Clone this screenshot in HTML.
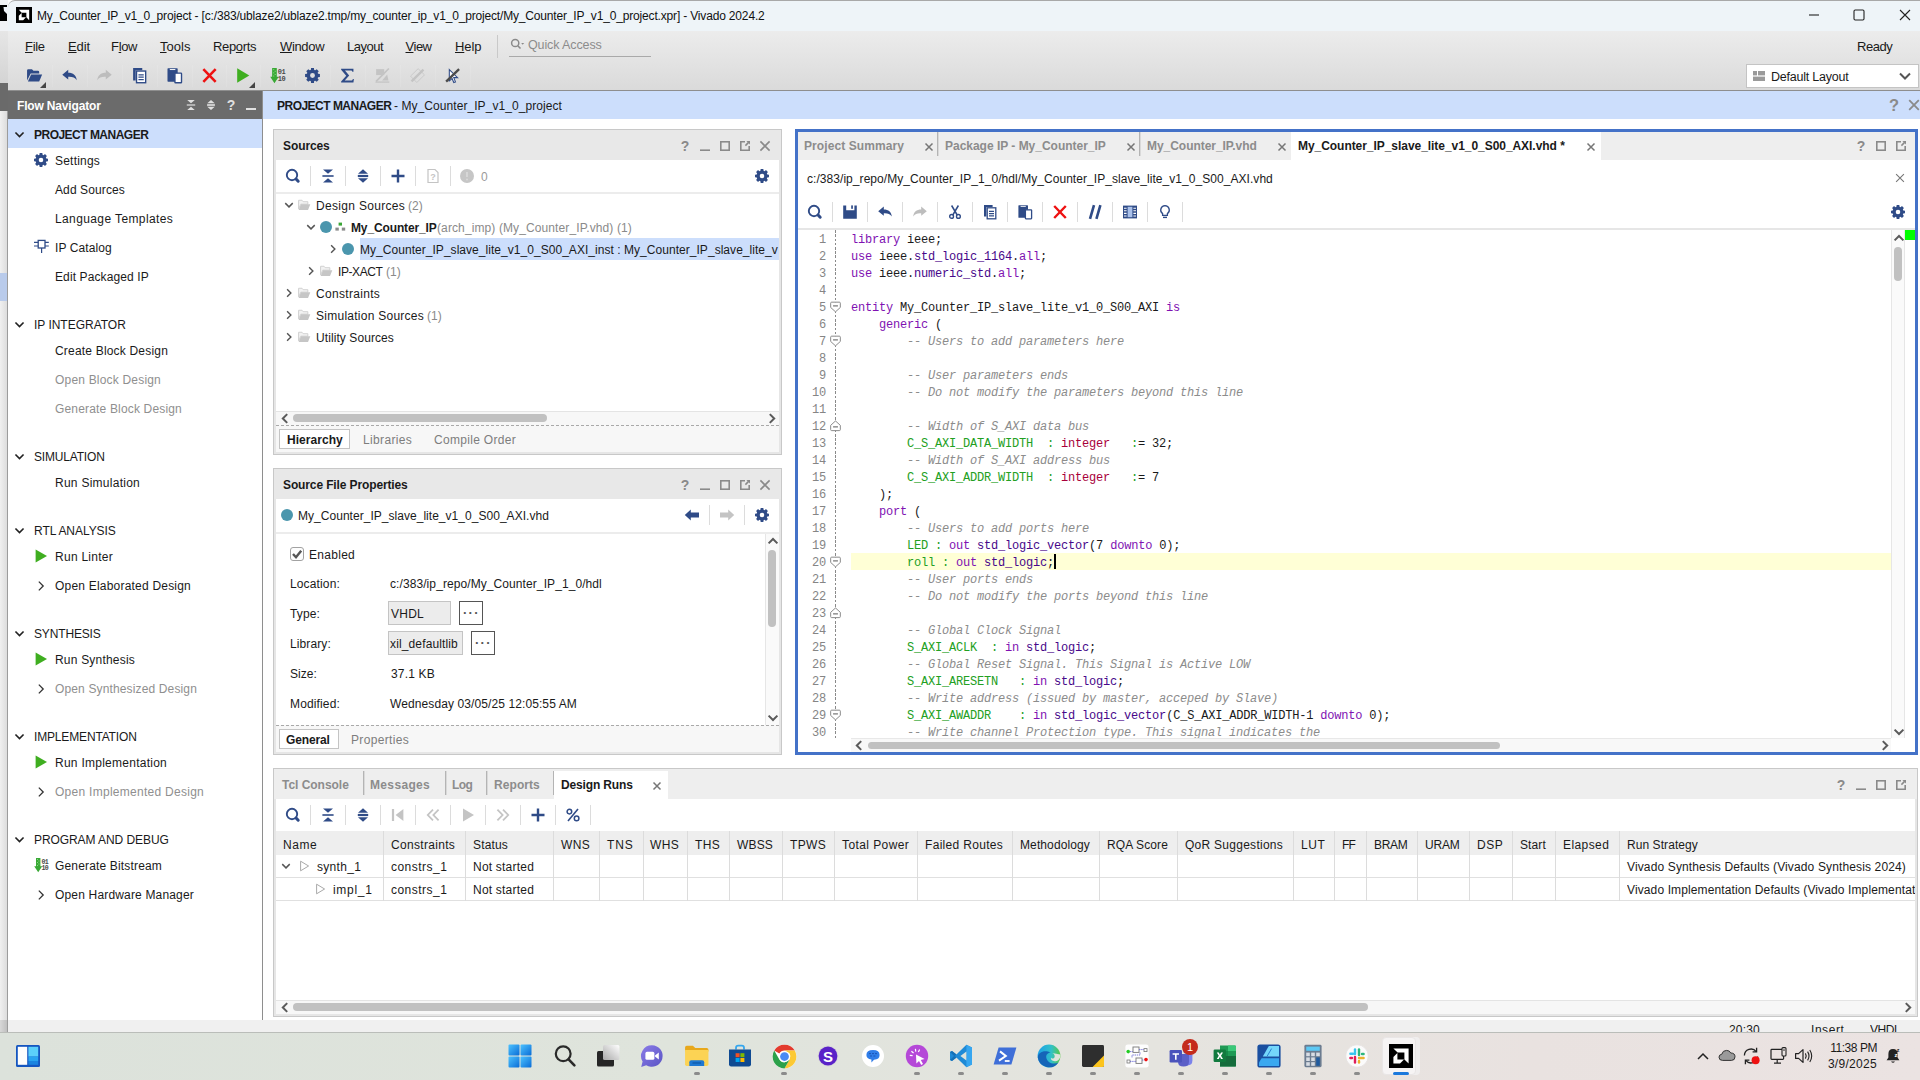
<!DOCTYPE html>
<html lang="en"><head><meta charset="utf-8"><title>Vivado 2024.2</title>
<style>
html,body{margin:0;padding:0;}
body{width:1920px;height:1080px;overflow:hidden;background:#fff;font-family:"Liberation Sans",sans-serif;font-size:12px;color:#1a1a1a;}
#root{position:relative;width:1920px;height:1080px;overflow:hidden;}
.b{position:absolute;box-sizing:border-box;}
.t{position:absolute;white-space:pre;}
svg{overflow:visible;}
.code{font-family:"Liberation Mono",monospace;font-size:12px;letter-spacing:-0.2px;}
.kw{color:#8012b2}.ty{color:#47088a}.cm{color:#8c8c8c;font-style:italic}.id{color:#22a022}.in{color:#a8003a}
u{text-decoration:underline;text-underline-offset:1px;}

</style></head>
<body>
<div id="root">
<section id="window-chrome">
<div class="b" style="left:0px;top:0px;width:8px;height:1032px;background:linear-gradient(90deg,#f0f0f0,#dadada);"></div>
<div class="b" style="left:0px;top:0px;width:8px;height:31px;background:#f1f3f6;"></div>
<div class="b" style="left:0px;top:5px;width:7px;height:16px;background:#000;"></div>
<svg class="b" style="left:0;top:5px" width="7" height="16" viewBox="0 0 7 16"><path d="M3.5 2L7 2L7 9L4 6Z" fill="#eef3f9"/></svg>
<div class="b" style="left:0px;top:31px;width:8px;height:52px;background:linear-gradient(180deg,#e6e6e6,#d4d4d4);"></div>
<div class="b" style="left:0px;top:83px;width:8px;height:28px;background:#6a6a6a;"></div>
<div class="b" style="left:0px;top:273px;width:8px;height:28px;background:#b9cbeb;"></div>
<div class="b" style="left:0px;top:1020px;width:8px;height:12px;background:linear-gradient(90deg,#d8d8d8,#bcbcbc);"></div>
<div class="b" style="left:7px;top:111px;width:1px;height:921px;background:#9c9c9c;"></div>
<div class="b" style="left:8px;top:0px;width:1912px;height:31px;background:#eef4f8;border-top:1px solid #a8a8a8;border-top-left-radius:7px;"></div>
<svg class="b" style="left:16px;top:7px;" width="16" height="16" viewBox="0 0 17 17"><rect width="17" height="17" fill="#000"/><path d="M3 3H14V14L11 11V6H6Z" fill="#fff"/><path d="M3 14V9.2L6 6.4V11H10.6L7.6 14Z" fill="#fff"/></svg>
<div class="t" style="top:8.0px;line-height:16px;font-size:12px;color:#111;letter-spacing:-0.168px;left:37px;">My_Counter_IP_v1_0_project - [c:/383/ublaze2/ublaze2.tmp/my_counter_ip_v1_0_project/My_Counter_IP_v1_0_project.xpr] - Vivado 2024.2</div>
<svg class="b" style="left:1806px;top:7.3px;" width="16" height="16" viewBox="0 0 16 16"><path d="M3 8h10" stroke="#222" stroke-width="1.1"/></svg>
<svg class="b" style="left:1851px;top:7px;" width="16" height="16" viewBox="0 0 16 16"><rect x="3" y="3" width="10" height="10" rx="1.2" fill="none" stroke="#222" stroke-width="1.1"/></svg>
<svg class="b" style="left:1897px;top:7px;" width="16" height="16" viewBox="0 0 16 16"><path d="M3 3L13 13M13 3L3 13" stroke="#222" stroke-width="1.1"/></svg>
<div class="b" style="left:8px;top:31px;width:1912px;height:59px;background:linear-gradient(180deg,#ececec 0%,#e3e3e3 50%,#dadada 100%);"></div>
<div class="b" style="left:8px;top:90px;width:1912px;height:1px;background:#8e8e8e;"></div>
<div class="t" style="top:39.0px;line-height:16px;font-size:13px;color:#1a1a1a;left:25px;letter-spacing:-0.316px;"><u>F</u>ile</div>
<div class="t" style="top:39.0px;line-height:16px;font-size:13px;color:#1a1a1a;left:68px;letter-spacing:-0.134px;"><u>E</u>dit</div>
<div class="t" style="top:39.0px;line-height:16px;font-size:13px;color:#1a1a1a;left:111px;letter-spacing:-0.316px;">F<u>l</u>ow</div>
<div class="t" style="top:39.0px;line-height:16px;font-size:13px;color:#1a1a1a;left:160px;letter-spacing:0.038px;"><u>T</u>ools</div>
<div class="t" style="top:39.0px;line-height:16px;font-size:13px;color:#1a1a1a;left:213px;letter-spacing:-0.337px;">Rep<u>o</u>rts</div>
<div class="t" style="top:39.0px;line-height:16px;font-size:13px;color:#1a1a1a;left:280px;letter-spacing:-0.347px;"><u>W</u>indow</div>
<div class="t" style="top:39.0px;line-height:16px;font-size:13px;color:#1a1a1a;left:347px;letter-spacing:-0.506px;">La<u>y</u>out</div>
<div class="t" style="top:39.0px;line-height:16px;font-size:13px;color:#1a1a1a;left:405.5px;letter-spacing:-0.481px;"><u>V</u>iew</div>
<div class="t" style="top:39.0px;line-height:16px;font-size:13px;color:#1a1a1a;left:455px;letter-spacing:-0.079px;"><u>H</u>elp</div>
<div class="b" style="left:497px;top:35px;width:1px;height:23px;background:#c9c9c9;"></div>
<svg class="b" style="left:509px;top:37px;" width="16" height="16" viewBox="0 0 16 16"><circle cx="6.2" cy="6" r="3.6" fill="none" stroke="#8a8a8a" stroke-width="1.5"/><path d="M8.8 8.8L11.5 11.5" stroke="#8a8a8a" stroke-width="1.6"/><path d="M12.2 6h3l-1.5 1.8z" fill="#8a8a8a"/></svg>
<div class="t" style="top:36.8px;line-height:16px;font-size:12.5px;color:#8c8c8c;letter-spacing:-0.111px;left:528px;">Quick Access</div>
<div class="b" style="left:509px;top:56px;width:142px;height:1px;background:#a9a9a9;"></div>
<div class="t" style="top:39.0px;line-height:16px;font-size:13px;color:#1a1a1a;letter-spacing:-0.445px;left:1857px;">Ready</div>
<svg class="b" style="left:25.5px;top:67.0px;" width="17" height="17" viewBox="0 0 16 16"><path d="M1 3.2Q1 2 2.2 2H5.6L7 3.6H11.2Q12.4 3.6 12.4 4.8V6H4.4L1 12.6z" fill="#2f4b87"/><path d="M4.8 7H15.2L12.4 13.6H1.8z" fill="#2f4b87"/></svg>
<svg class="b" style="left:40px;top:82px;" width="5" height="5" viewBox="0 0 5 5"><path d="M6 0V6H0z" fill="#444"/></svg>
<svg class="b" style="left:60.5px;top:67.0px;" width="17" height="17" viewBox="0 0 16 16"><path d="M1.2 7.2L6.8 2.6V5.4C11.5 5.4 14.4 7.8 14.8 12.4C13 9.8 10.6 9 6.8 9.2V11.8z" fill="#2f4b87"/></svg>
<svg class="b" style="left:95.5px;top:67.0px;" width="17" height="17" viewBox="0 0 16 16"><path d="M14.8 7.2L9.2 2.6V5.4C4.5 5.4 1.6 7.8 1.2 12.4C3 9.8 5.4 9 9.2 9.2V11.8z" fill="#bdbdbd"/></svg>
<svg class="b" style="left:130.5px;top:67.0px;" width="17" height="17" viewBox="0 0 16 16"><path d="M2 1h8.6v2H4.4v9.6H2z" fill="#2f4b87"/><rect x="5.2" y="3.8" width="8.6" height="11" rx="0" fill="#fff" stroke="#2f4b87" stroke-width="1.3"/><path d="M7 7.4h5M7 9.6h5M7 11.8h5" stroke="#2f4b87" stroke-width="1.2"/></svg>
<svg class="b" style="left:165.5px;top:67.0px;" width="17" height="17" viewBox="0 0 16 16"><rect x="1.4" y="1.2" width="9.6" height="12.6" rx="0.6" fill="#2f4b87"/><path d="M3.6 2.4h5.2" stroke="#fff" stroke-width="0.9"/><rect x="8.4" y="5.8" width="6.2" height="9" rx="0.5" fill="#fff" stroke="#2f4b87" stroke-width="1.3"/></svg>
<svg class="b" style="left:200.5px;top:67.0px;" width="17" height="17" viewBox="0 0 16 16"><path d="M2.2 2L13.8 14M13.8 2L2.2 14" stroke="#ee1111" stroke-width="2.4"/></svg>
<svg class="b" style="left:233.5px;top:67.0px;" width="17" height="17" viewBox="0 0 16 16"><path d="M3 1.2L14.4 8L3 14.8z" fill="#3fae20"/></svg>
<svg class="b" style="left:249px;top:82px;" width="5" height="5" viewBox="0 0 5 5"><path d="M6 0V6H0z" fill="#444"/></svg>
<svg class="b" style="left:269.5px;top:67.0px;" width="17" height="17" viewBox="0 0 16 16"><path d="M2 1h4.4v8.2h1.8L4.2 15.2L0.2 9.2H2z" fill="#39a935"/><path d="M3 2.5h1M4.4 4h1M3 5.5h1M4.4 7h1M3 8.5h1" stroke="#8fdc8a" stroke-width="0.9"/><text x="7.4" y="6.8" font-family="Liberation Mono, monospace" font-weight="bold" font-size="6.6" fill="#4a4a4a" letter-spacing="-0.5">01</text><text x="7.4" y="13.2" font-family="Liberation Mono, monospace" font-weight="bold" font-size="6.6" fill="#4a4a4a" letter-spacing="-0.5">10</text></svg>
<svg class="b" style="left:303.5px;top:67.0px;" width="17" height="17" viewBox="0 0 16 16"><path d="M6.66 1.03L9.34 1.03L9.57 2.73L10.61 3.16L11.98 2.12L13.88 4.02L12.84 5.39L13.27 6.43L14.97 6.66L14.97 9.34L13.27 9.57L12.84 10.61L13.88 11.98L11.98 13.88L10.61 12.84L9.57 13.27L9.34 14.97L6.66 14.97L6.43 13.27L5.39 12.84L4.02 13.88L2.12 11.98L3.16 10.61L2.73 9.57L1.03 9.34L1.03 6.66L2.73 6.43L3.16 5.39L2.12 4.02L4.02 2.12L5.39 3.16L6.43 2.73ZM8 5.7A2.3 2.3 0 1 0 8 10.3A2.3 2.3 0 1 0 8 5.7Z" fill="#2f4b87" fill-rule="evenodd"/></svg>
<svg class="b" style="left:338.5px;top:67.0px;" width="17" height="17" viewBox="0 0 16 16"><path d="M2 1.6H13.6V4.4H12.6C12.4 3.4 12 3.2 11 3.2H5.6L9.6 8L5.4 12.8H11.2C12.4 12.8 12.8 12.4 13 11.2H14L13.6 14.6H2V13.6L6.8 8.2L2 2.6z" fill="#2f4b87"/></svg>
<svg class="b" style="left:373.5px;top:67.0px;" width="17" height="17" viewBox="0 0 16 16"><rect x="2" y="2" width="7.6" height="5.6" fill="#c4c4c4"/><path d="M14 1.4L2 13.6" stroke="#c4c4c4" stroke-width="1.6"/><path d="M7.6 12.8L13.6 12.8L12.4 7z" fill="#c4c4c4"/><path d="M1.4 14.2H14.4" stroke="#c4c4c4" stroke-width="1.2"/></svg>
<svg class="b" style="left:408.5px;top:67.0px;" width="17" height="17" viewBox="0 0 16 16"><path d="M8.6 1.6L14.6 7.4L7.4 14.6L1.4 8.6z" fill="none" stroke="#c8c8c8" stroke-width="0.9"/><path d="M13.6 2.4L2.4 13.6" stroke="#c4c4c4" stroke-width="2.2"/></svg>
<svg class="b" style="left:443.5px;top:67.0px;" width="17" height="17" viewBox="0 0 16 16"><path d="M5 2.4L12.8 10H9.2L10.8 14L9.2 14.6L7.6 10.8L5 13z" fill="#fff" stroke="#2f4b87" stroke-width="1"/><path d="M14.2 2L2 13.8" stroke="#4a4a4a" stroke-width="2.2"/></svg>
<div class="b" style="left:52px;top:65px;width:1px;height:22px;background:rgba(255,255,255,0.10);"></div>
<div class="b" style="left:87px;top:65px;width:1px;height:22px;background:rgba(255,255,255,0.10);"></div>
<div class="b" style="left:122px;top:65px;width:1px;height:22px;background:rgba(255,255,255,0.10);"></div>
<div class="b" style="left:157px;top:65px;width:1px;height:22px;background:rgba(255,255,255,0.10);"></div>
<div class="b" style="left:192px;top:65px;width:1px;height:22px;background:rgba(255,255,255,0.10);"></div>
<div class="b" style="left:226px;top:65px;width:1px;height:22px;background:rgba(255,255,255,0.10);"></div>
<div class="b" style="left:260px;top:65px;width:1px;height:22px;background:rgba(255,255,255,0.10);"></div>
<div class="b" style="left:295px;top:65px;width:1px;height:22px;background:rgba(255,255,255,0.10);"></div>
<div class="b" style="left:330px;top:65px;width:1px;height:22px;background:rgba(255,255,255,0.10);"></div>
<div class="b" style="left:365px;top:65px;width:1px;height:22px;background:rgba(255,255,255,0.10);"></div>
<div class="b" style="left:400px;top:65px;width:1px;height:22px;background:rgba(255,255,255,0.10);"></div>
<div class="b" style="left:435px;top:65px;width:1px;height:22px;background:rgba(255,255,255,0.10);"></div>
<div class="b" style="left:470px;top:65px;width:1px;height:22px;background:rgba(255,255,255,0.10);"></div>
<div class="b" style="left:1746px;top:64px;width:173px;height:24px;background:#fff;border:1px solid #c4c4c4;"></div>
<svg class="b" style="left:1753px;top:71px;" width="12" height="10" viewBox="0 0 12 10"><rect x="0" y="0" width="4" height="4.4" fill="#9a9a9a"/><rect x="5" y="0" width="7" height="4.4" fill="#9a9a9a"/><rect x="0" y="5.6" width="12" height="4.4" fill="#9a9a9a"/></svg>
<div class="t" style="top:69.2px;line-height:16px;font-size:12.5px;color:#1a1a1a;letter-spacing:-0.216px;left:1771px;">Default Layout</div>
<svg class="b" style="left:1897px;top:68px;" width="16" height="16" viewBox="0 0 16 16"><path d="M3 5.5L8 10.5L13 5.5" fill="none" stroke="#555" stroke-width="2.0"/></svg>
</section>
<section id="flow-navigator">
<div class="b" style="left:8px;top:91px;width:254px;height:929px;background:#fff;"></div>
<div class="b" style="left:262px;top:91px;width:1px;height:929px;background:#8e8e8e;"></div>
<div class="b" style="left:8px;top:91px;width:254px;height:28px;background:#6b6b6b;"></div>
<div class="t" style="top:97.8px;line-height:16px;font-size:12px;color:#fff;letter-spacing:-0.170px;left:17px;font-weight:bold;">Flow Navigator</div>
<svg class="b" style="left:185px;top:99px;" width="12" height="12" viewBox="0 0 16 16"><path d="M2.4 7.2h11.2v1.6H2.4z" fill="#e0e0e0"/><path d="M3 1.4h10L8 5.8zM3 14.6h10L8 10.2z" fill="#e0e0e0"/></svg>
<svg class="b" style="left:205px;top:99px;" width="12" height="12" viewBox="0 0 16 16"><path d="M2.8 6.9h10.4v2.2H2.8z" fill="#e0e0e0"/><path d="M3 5.8h10L8 1.2zM3 10.2h10L8 14.8z" fill="#e0e0e0"/></svg>
<svg class="b" style="left:223px;top:97px;" width="16" height="16" viewBox="0 0 16 16"><text x="8" y="13" text-anchor="middle" font-family="Liberation Sans, sans-serif" font-weight="bold" font-size="14" fill="#e0e0e0">?</text></svg>
<div class="b" style="left:246px;top:108px;width:10px;height:2px;background:#e0e0e0;"></div>
<div class="b" style="left:8px;top:119px;width:254px;height:29px;background:#ccdefc;"></div>
<svg class="b" style="left:13px;top:128px;" width="13" height="13" viewBox="0 0 16 16"><path d="M3 5.5L8 10.5L13 5.5" fill="none" stroke="#222" stroke-width="2.0"/></svg>
<div class="t" style="top:126.8px;line-height:16px;font-size:12px;color:#1a1a1a;letter-spacing:-0.515px;left:34px;font-weight:bold;">PROJECT MANAGER</div>
<div class="t" style="top:152.8px;line-height:16px;font-size:12px;color:#1a1a1a;letter-spacing:0.206px;left:55px;">Settings</div>
<svg class="b" style="left:33px;top:152px;" width="16" height="16" viewBox="0 0 16 16"><path d="M6.66 1.03L9.34 1.03L9.57 2.73L10.61 3.16L11.98 2.12L13.88 4.02L12.84 5.39L13.27 6.43L14.97 6.66L14.97 9.34L13.27 9.57L12.84 10.61L13.88 11.98L11.98 13.88L10.61 12.84L9.57 13.27L9.34 14.97L6.66 14.97L6.43 13.27L5.39 12.84L4.02 13.88L2.12 11.98L3.16 10.61L2.73 9.57L1.03 9.34L1.03 6.66L2.73 6.43L3.16 5.39L2.12 4.02L4.02 2.12L5.39 3.16L6.43 2.73ZM8 5.7A2.3 2.3 0 1 0 8 10.3A2.3 2.3 0 1 0 8 5.7Z" fill="#2f4b87" fill-rule="evenodd"/></svg>
<div class="t" style="top:181.8px;line-height:16px;font-size:12px;color:#1a1a1a;letter-spacing:0.109px;left:55px;">Add Sources</div>
<div class="t" style="top:210.8px;line-height:16px;font-size:12px;color:#1a1a1a;letter-spacing:0.388px;left:55px;">Language Templates</div>
<div class="t" style="top:239.8px;line-height:16px;font-size:12px;color:#1a1a1a;letter-spacing:0.109px;left:55px;">IP Catalog</div>
<svg class="b" style="left:33px;top:238px;" width="16" height="16" viewBox="0 0 16 16"><rect x="5.2" y="2.4" width="6.8" height="7.6" fill="none" stroke="#2f4b87" stroke-width="1.3"/><path d="M1 4.4H5.2M1 8H5.2M12 4.4H15.8M12 8H15.8M8.6 10V15" stroke="#2f4b87" stroke-width="1.2" fill="none"/></svg>
<div class="t" style="top:268.8px;line-height:16px;font-size:12px;color:#1a1a1a;letter-spacing:0.116px;left:55px;">Edit Packaged IP</div>
<svg class="b" style="left:13px;top:318px;" width="13" height="13" viewBox="0 0 16 16"><path d="M3 5.5L8 10.5L13 5.5" fill="none" stroke="#222" stroke-width="2.0"/></svg>
<div class="t" style="top:316.8px;line-height:16px;font-size:12px;color:#1a1a1a;letter-spacing:-0.018px;left:34px;">IP INTEGRATOR</div>
<div class="t" style="top:342.8px;line-height:16px;font-size:12px;color:#1a1a1a;letter-spacing:0.190px;left:55px;">Create Block Design</div>
<div class="t" style="top:371.8px;line-height:16px;font-size:12px;color:#8f8f8f;letter-spacing:0.192px;left:55px;">Open Block Design</div>
<div class="t" style="top:400.8px;line-height:16px;font-size:12px;color:#8f8f8f;letter-spacing:0.170px;left:55px;">Generate Block Design</div>
<svg class="b" style="left:13px;top:450px;" width="13" height="13" viewBox="0 0 16 16"><path d="M3 5.5L8 10.5L13 5.5" fill="none" stroke="#222" stroke-width="2.0"/></svg>
<div class="t" style="top:448.8px;line-height:16px;font-size:12px;color:#1a1a1a;letter-spacing:-0.184px;left:34px;">SIMULATION</div>
<div class="t" style="top:474.8px;line-height:16px;font-size:12px;color:#1a1a1a;letter-spacing:0.263px;left:55px;">Run Simulation</div>
<svg class="b" style="left:13px;top:524px;" width="13" height="13" viewBox="0 0 16 16"><path d="M3 5.5L8 10.5L13 5.5" fill="none" stroke="#222" stroke-width="2.0"/></svg>
<div class="t" style="top:522.8px;line-height:16px;font-size:12px;color:#1a1a1a;letter-spacing:-0.062px;left:34px;">RTL ANALYSIS</div>
<div class="t" style="top:548.8px;line-height:16px;font-size:12px;color:#1a1a1a;letter-spacing:0.270px;left:55px;">Run Linter</div>
<svg class="b" style="left:34px;top:549.2px;" width="14" height="14" viewBox="0 0 14 14"><path d="M1.6 0.6L13 7L1.6 13.4z" fill="#3fae20"/></svg>
<div class="t" style="top:577.8px;line-height:16px;font-size:12px;color:#1a1a1a;letter-spacing:0.208px;left:55px;">Open Elaborated Design</div>
<svg class="b" style="left:33.7px;top:578.6px;" width="14" height="14" viewBox="0 0 16 16"><path d="M5.5 3L10.5 8L5.5 13" fill="none" stroke="#333" stroke-width="1.5"/></svg>
<svg class="b" style="left:13px;top:627px;" width="13" height="13" viewBox="0 0 16 16"><path d="M3 5.5L8 10.5L13 5.5" fill="none" stroke="#222" stroke-width="2.0"/></svg>
<div class="t" style="top:625.8px;line-height:16px;font-size:12px;color:#1a1a1a;letter-spacing:-0.152px;left:34px;">SYNTHESIS</div>
<div class="t" style="top:651.8px;line-height:16px;font-size:12px;color:#1a1a1a;letter-spacing:0.202px;left:55px;">Run Synthesis</div>
<svg class="b" style="left:34px;top:652.2px;" width="14" height="14" viewBox="0 0 14 14"><path d="M1.6 0.6L13 7L1.6 13.4z" fill="#3fae20"/></svg>
<div class="t" style="top:680.8px;line-height:16px;font-size:12px;color:#8f8f8f;letter-spacing:0.139px;left:55px;">Open Synthesized Design</div>
<svg class="b" style="left:33.7px;top:681.6px;" width="14" height="14" viewBox="0 0 16 16"><path d="M5.5 3L10.5 8L5.5 13" fill="none" stroke="#333" stroke-width="1.5"/></svg>
<svg class="b" style="left:13px;top:730px;" width="13" height="13" viewBox="0 0 16 16"><path d="M3 5.5L8 10.5L13 5.5" fill="none" stroke="#222" stroke-width="2.0"/></svg>
<div class="t" style="top:728.8px;line-height:16px;font-size:12px;color:#1a1a1a;letter-spacing:-0.161px;left:34px;">IMPLEMENTATION</div>
<div class="t" style="top:754.8px;line-height:16px;font-size:12px;color:#1a1a1a;letter-spacing:0.259px;left:55px;">Run Implementation</div>
<svg class="b" style="left:34px;top:755.2px;" width="14" height="14" viewBox="0 0 14 14"><path d="M1.6 0.6L13 7L1.6 13.4z" fill="#3fae20"/></svg>
<div class="t" style="top:783.8px;line-height:16px;font-size:12px;color:#8f8f8f;letter-spacing:0.275px;left:55px;">Open Implemented Design</div>
<svg class="b" style="left:33.7px;top:784.6px;" width="14" height="14" viewBox="0 0 16 16"><path d="M5.5 3L10.5 8L5.5 13" fill="none" stroke="#333" stroke-width="1.5"/></svg>
<svg class="b" style="left:13px;top:833px;" width="13" height="13" viewBox="0 0 16 16"><path d="M3 5.5L8 10.5L13 5.5" fill="none" stroke="#222" stroke-width="2.0"/></svg>
<div class="t" style="top:831.8px;line-height:16px;font-size:12px;color:#1a1a1a;letter-spacing:-0.076px;left:34px;">PROGRAM AND DEBUG</div>
<div class="t" style="top:857.8px;line-height:16px;font-size:12px;color:#1a1a1a;letter-spacing:0.162px;left:55px;">Generate Bitstream</div>
<svg class="b" style="left:34px;top:857px;" width="16" height="16" viewBox="0 0 16 16"><path d="M2 1h4.4v8.2h1.8L4.2 15.2L0.2 9.2H2z" fill="#39a935"/><path d="M3 2.5h1M4.4 4h1M3 5.5h1M4.4 7h1M3 8.5h1" stroke="#8fdc8a" stroke-width="0.9"/><text x="7.4" y="6.8" font-family="Liberation Mono, monospace" font-weight="bold" font-size="6.6" fill="#4a4a4a" letter-spacing="-0.5">01</text><text x="7.4" y="13.2" font-family="Liberation Mono, monospace" font-weight="bold" font-size="6.6" fill="#4a4a4a" letter-spacing="-0.5">10</text></svg>
<div class="t" style="top:886.8px;line-height:16px;font-size:12px;color:#1a1a1a;letter-spacing:0.170px;left:55px;">Open Hardware Manager</div>
<svg class="b" style="left:33.7px;top:887.6px;" width="14" height="14" viewBox="0 0 16 16"><path d="M5.5 3L10.5 8L5.5 13" fill="none" stroke="#333" stroke-width="1.5"/></svg>
<div class="b" style="left:8px;top:1020px;width:1912px;height:12px;background:#f0f0f0;"></div>
<div class="b" style="left:263px;top:91px;width:1657px;height:28px;background:#ccdefc;"></div>
<div class="t" style="top:97.8px;line-height:16px;font-size:12px;color:#1a1a1a;letter-spacing:-0.515px;left:277px;font-weight:bold;">PROJECT MANAGER</div>
<div class="t" style="top:97.8px;line-height:16px;font-size:12px;color:#1a1a1a;letter-spacing:0.063px;left:394px;">- My_Counter_IP_v1_0_project</div>
<svg class="b" style="left:1886px;top:98px;" width="16" height="16" viewBox="0 0 16 16"><text x="8" y="13" text-anchor="middle" font-family="Liberation Sans, sans-serif" font-weight="bold" font-size="16.5" fill="#8a8a8a">?</text></svg>
<svg class="b" style="left:1906px;top:97px;" width="16" height="16" viewBox="0 0 16 16"><path d="M3.2 3.2L12.8 12.8M12.8 3.2L3.2 12.8" stroke="#8a8a8a" stroke-width="1.8" fill="none"/></svg>
</section>
<section id="sources-panel">
<div class="b" style="left:273px;top:129px;width:509px;height:326px;background:#fff;border:1px solid #c8c8c8;"></div>
<div class="b" style="left:274px;top:130px;width:507px;height:324px;border:2px solid #e6e6e6;"></div>
<div class="b" style="left:274px;top:130px;width:507px;height:30px;background:#e8e8e8;"></div>
<div class="t" style="top:137.8px;line-height:16px;font-size:12px;color:#1a1a1a;letter-spacing:-0.093px;left:283px;font-weight:bold;">Sources</div>
<svg class="b" style="left:677px;top:138px;" width="16" height="16" viewBox="0 0 16 16"><text x="8" y="13" text-anchor="middle" font-family="Liberation Sans, sans-serif" font-weight="bold" font-size="14" fill="#8a8a8a">?</text></svg>
<svg class="b" style="left:697px;top:138px;" width="16" height="16" viewBox="0 0 16 16"><path d="M3 12.2h10" stroke="#8a8a8a" stroke-width="1.6"/></svg>
<svg class="b" style="left:717px;top:138px;" width="16" height="16" viewBox="0 0 16 16"><rect x="3.8" y="3.8" width="8.4" height="8.4" fill="none" stroke="#8a8a8a" stroke-width="1.6"/></svg>
<svg class="b" style="left:737px;top:138px;" width="16" height="16" viewBox="0 0 16 16"><path d="M8 3.8H3.8V12.2H12.2V8" fill="none" stroke="#8a8a8a" stroke-width="1.6"/><path d="M8.4 7.6L11.6 4.4" stroke="#8a8a8a" stroke-width="1.5"/><path d="M13 3V6.6L9.4 3z" fill="#8a8a8a"/></svg>
<svg class="b" style="left:757px;top:138px;" width="16" height="16" viewBox="0 0 16 16"><path d="M3.4000000000000004 3.4000000000000004L12.6 12.6M12.6 3.4000000000000004L3.4000000000000004 12.6" stroke="#8a8a8a" stroke-width="1.6" fill="none"/></svg>
<svg class="b" style="left:285.0px;top:168.0px;" width="16" height="16" viewBox="0 0 16 16"><circle cx="7" cy="7" r="5.2" fill="none" stroke="#2f4b87" stroke-width="1.9"/><path d="M11.4 11.4L13.2 13.2" stroke="#2f4b87" stroke-width="3" stroke-linecap="round"/></svg>
<svg class="b" style="left:320.0px;top:168.0px;" width="16" height="16" viewBox="0 0 16 16"><path d="M2.4 7.2h11.2v1.6H2.4z" fill="#2f4b87"/><path d="M3 1.4h10L8 5.8zM3 14.6h10L8 10.2z" fill="#2f4b87"/></svg>
<svg class="b" style="left:355.0px;top:168.0px;" width="16" height="16" viewBox="0 0 16 16"><path d="M2.8 6.9h10.4v2.2H2.8z" fill="#2f4b87"/><path d="M3 5.8h10L8 1.2zM3 10.2h10L8 14.8z" fill="#2f4b87"/></svg>
<svg class="b" style="left:390.0px;top:168.0px;" width="16" height="16" viewBox="0 0 16 16"><path d="M6.8 1.5h2.4v5.3h5.3v2.4H9.2v5.3H6.8V9.2H1.5V6.8h5.3z" fill="#2f4b87"/></svg>
<svg class="b" style="left:425.0px;top:168.0px;" width="16" height="16" viewBox="0 0 16 16"><path d="M3 1.5h7l3 3V14.5H3z" fill="none" stroke="#c4c4c4" stroke-width="1.2"/><text x="8" y="12" font-size="9" font-weight="bold" text-anchor="middle" fill="#c4c4c4" font-family="Liberation Sans, sans-serif">?</text></svg>
<svg class="b" style="left:459.0px;top:168.0px;" width="16" height="16" viewBox="0 0 16 16"><circle cx="8" cy="8" r="7" fill="#c6c6c6"/><path d="M8 4v5" stroke="#d9d9d9" stroke-width="1.8"/><circle cx="8" cy="11.4" r="1" fill="#d9d9d9"/></svg>
<div class="t" style="top:168.8px;line-height:16px;font-size:12px;color:#9a9a9a;left:481px;">0</div>
<svg class="b" style="left:754.0px;top:168.0px;" width="16" height="16" viewBox="0 0 16 16"><path d="M6.66 1.03L9.34 1.03L9.57 2.73L10.61 3.16L11.98 2.12L13.88 4.02L12.84 5.39L13.27 6.43L14.97 6.66L14.97 9.34L13.27 9.57L12.84 10.61L13.88 11.98L11.98 13.88L10.61 12.84L9.57 13.27L9.34 14.97L6.66 14.97L6.43 13.27L5.39 12.84L4.02 13.88L2.12 11.98L3.16 10.61L2.73 9.57L1.03 9.34L1.03 6.66L2.73 6.43L3.16 5.39L2.12 4.02L4.02 2.12L5.39 3.16L6.43 2.73ZM8 5.7A2.3 2.3 0 1 0 8 10.3A2.3 2.3 0 1 0 8 5.7Z" fill="#2f4b87" fill-rule="evenodd"/></svg>
<div class="b" style="left:310px;top:166px;width:1px;height:20px;background:#dcdcdc;"></div>
<div class="b" style="left:345px;top:166px;width:1px;height:20px;background:#dcdcdc;"></div>
<div class="b" style="left:380px;top:166px;width:1px;height:20px;background:#dcdcdc;"></div>
<div class="b" style="left:415px;top:166px;width:1px;height:20px;background:#dcdcdc;"></div>
<div class="b" style="left:450px;top:166px;width:1px;height:20px;background:#dcdcdc;"></div>
<div class="b" style="left:276px;top:192px;width:503px;height:2px;background:#ececec;"></div>
<svg class="b" style="left:283px;top:199px;" width="12" height="12" viewBox="0 0 16 16"><path d="M3 5.5L8 10.5L13 5.5" fill="none" stroke="#555" stroke-width="1.9"/></svg>
<svg class="b" style="left:297px;top:198px;" width="14" height="14" viewBox="0 0 16 16"><path d="M1.8 2.6h4l1.2 1.6H12.4V7H4.4L1.8 12.4z" fill="#f2f2f2" stroke="#cdcdcd" stroke-width="1"/><path d="M4.6 7H15.2L12.6 13.6H1.8z" fill="#c6c6c6"/></svg>
<div class="t" style="top:197.8px;line-height:16px;font-size:12px;color:#1a1a1a;letter-spacing:0.314px;left:316px;">Design Sources</div>
<div class="t" style="top:197.8px;line-height:16px;font-size:12px;color:#8a8a8a;left:408px;">(2)</div>
<svg class="b" style="left:305px;top:221px;" width="12" height="12" viewBox="0 0 16 16"><path d="M3 5.5L8 10.5L13 5.5" fill="none" stroke="#555" stroke-width="1.9"/></svg>
<svg class="b" style="left:320px;top:221px;" width="12" height="12" viewBox="0 0 12 12"><circle cx="6" cy="6" r="6" fill="#4b96ad"/></svg>
<svg class="b" style="left:335px;top:222px;" width="11" height="10" viewBox="0 0 11 10"><rect x="3.6" y="0.6" width="3.4" height="3" fill="#3aa635"/><rect x="0.4" y="5.6" width="3.4" height="3" fill="#8a8a8a"/><rect x="6.8" y="5.6" width="3.4" height="3" fill="#8a8a8a"/></svg>
<div class="t" style="top:219.8px;line-height:16px;font-size:12px;color:#1a1a1a;letter-spacing:-0.130px;left:351px;font-weight:bold;">My_Counter_IP</div>
<div class="t" style="top:219.8px;line-height:16px;font-size:12px;color:#8a8a8a;letter-spacing:0.109px;left:437px;">(arch_imp) (My_Counter_IP.vhd) (1)</div>
<svg class="b" style="left:327px;top:243px;" width="12" height="12" viewBox="0 0 16 16"><path d="M5.5 3L10.5 8L5.5 13" fill="none" stroke="#555" stroke-width="1.9"/></svg>
<svg class="b" style="left:342px;top:243px;" width="12" height="12" viewBox="0 0 12 12"><circle cx="6" cy="6" r="6" fill="#4b96ad"/></svg>
<div class="b" style="left:360px;top:238px;width:419px;height:22px;background:#ccdefc;"></div>
<div class="t" style="top:241.8px;line-height:16px;font-size:12px;color:#1a1a1a;letter-spacing:0.041px;left:360px;width:419px;overflow:hidden;">My_Counter_IP_slave_lite_v1_0_S00_AXI_inst : My_Counter_IP_slave_lite_v</div>
<svg class="b" style="left:305px;top:265px;" width="12" height="12" viewBox="0 0 16 16"><path d="M5.5 3L10.5 8L5.5 13" fill="none" stroke="#555" stroke-width="1.9"/></svg>
<svg class="b" style="left:319px;top:264px;" width="14" height="14" viewBox="0 0 16 16"><path d="M1.8 2.6h4l1.2 1.6H12.4V7H4.4L1.8 12.4z" fill="#f2f2f2" stroke="#cdcdcd" stroke-width="1"/><path d="M4.6 7H15.2L12.6 13.6H1.8z" fill="#c6c6c6"/></svg>
<div class="t" style="top:263.8px;line-height:16px;font-size:12px;color:#1a1a1a;letter-spacing:-0.423px;left:338px;">IP-XACT</div>
<div class="t" style="top:263.8px;line-height:16px;font-size:12px;color:#8a8a8a;left:386px;">(1)</div>
<svg class="b" style="left:283px;top:287px;" width="12" height="12" viewBox="0 0 16 16"><path d="M5.5 3L10.5 8L5.5 13" fill="none" stroke="#555" stroke-width="1.9"/></svg>
<svg class="b" style="left:297px;top:286px;" width="14" height="14" viewBox="0 0 16 16"><path d="M1.8 2.6h4l1.2 1.6H12.4V7H4.4L1.8 12.4z" fill="#f2f2f2" stroke="#cdcdcd" stroke-width="1"/><path d="M4.6 7H15.2L12.6 13.6H1.8z" fill="#c6c6c6"/></svg>
<div class="t" style="top:285.8px;line-height:16px;font-size:12px;color:#1a1a1a;letter-spacing:0.311px;left:316px;">Constraints</div>
<svg class="b" style="left:283px;top:309px;" width="12" height="12" viewBox="0 0 16 16"><path d="M5.5 3L10.5 8L5.5 13" fill="none" stroke="#555" stroke-width="1.9"/></svg>
<svg class="b" style="left:297px;top:308px;" width="14" height="14" viewBox="0 0 16 16"><path d="M1.8 2.6h4l1.2 1.6H12.4V7H4.4L1.8 12.4z" fill="#f2f2f2" stroke="#cdcdcd" stroke-width="1"/><path d="M4.6 7H15.2L12.6 13.6H1.8z" fill="#c6c6c6"/></svg>
<div class="t" style="top:307.8px;line-height:16px;font-size:12px;color:#1a1a1a;letter-spacing:0.260px;left:316px;">Simulation Sources</div>
<div class="t" style="top:307.8px;line-height:16px;font-size:12px;color:#8a8a8a;left:427px;">(1)</div>
<svg class="b" style="left:283px;top:331px;" width="12" height="12" viewBox="0 0 16 16"><path d="M5.5 3L10.5 8L5.5 13" fill="none" stroke="#555" stroke-width="1.9"/></svg>
<svg class="b" style="left:297px;top:330px;" width="14" height="14" viewBox="0 0 16 16"><path d="M1.8 2.6h4l1.2 1.6H12.4V7H4.4L1.8 12.4z" fill="#f2f2f2" stroke="#cdcdcd" stroke-width="1"/><path d="M4.6 7H15.2L12.6 13.6H1.8z" fill="#c6c6c6"/></svg>
<div class="t" style="top:329.8px;line-height:16px;font-size:12px;color:#1a1a1a;letter-spacing:0.079px;left:316px;">Utility Sources</div>
<div class="b" style="left:276px;top:411px;width:503px;height:14px;background:#f7f7f7;border-top:1px solid #e4e4e4;"></div>
<div class="b" style="left:293px;top:414px;width:254px;height:8px;background:#c1c1c1;border-radius:4px;"></div>
<svg class="b" style="left:278.5px;top:412px;" width="12" height="12" viewBox="0 0 12 12"><path d="M8.2 2.1L3.8 6.5L8.2 10.9" fill="none" stroke="#5a5a5a" stroke-width="2"/></svg>
<svg class="b" style="left:766px;top:412px;" width="12" height="12" viewBox="0 0 12 12"><path d="M3.8 2.1L8.2 6.5L3.8 10.9" fill="none" stroke="#5a5a5a" stroke-width="2"/></svg>
<div class="b" style="left:276px;top:425px;width:503px;height:27px;background:#f7f7f7;"></div>
<div class="b" style="left:276px;top:425px;width:503px;height:1px;border-top:1px dashed #a9a9a9;"></div>
<div class="b" style="left:279px;top:429px;width:71px;height:20px;background:#fff;border:1px solid #c4c4c4;"></div>
<div class="t" style="top:431.8px;line-height:16px;font-size:12px;color:#1a1a1a;letter-spacing:0.054px;left:287px;font-weight:bold;">Hierarchy</div>
<div class="t" style="top:431.8px;line-height:16px;font-size:12px;color:#7d7d7d;letter-spacing:0.347px;left:363px;">Libraries</div>
<div class="t" style="top:431.8px;line-height:16px;font-size:12px;color:#7d7d7d;letter-spacing:0.314px;left:434px;">Compile Order</div>
</section>
<section id="source-file-properties">
<div class="b" style="left:273px;top:468px;width:509px;height:287px;background:#fff;border:1px solid #c8c8c8;"></div>
<div class="b" style="left:274px;top:469px;width:507px;height:285px;border:2px solid #e6e6e6;"></div>
<div class="b" style="left:274px;top:469px;width:507px;height:30px;background:#e8e8e8;"></div>
<div class="t" style="top:476.8px;line-height:16px;font-size:12px;color:#1a1a1a;letter-spacing:-0.123px;left:283px;font-weight:bold;">Source File Properties</div>
<svg class="b" style="left:677px;top:477px;" width="16" height="16" viewBox="0 0 16 16"><text x="8" y="13" text-anchor="middle" font-family="Liberation Sans, sans-serif" font-weight="bold" font-size="14" fill="#8a8a8a">?</text></svg>
<svg class="b" style="left:697px;top:477px;" width="16" height="16" viewBox="0 0 16 16"><path d="M3 12.2h10" stroke="#8a8a8a" stroke-width="1.6"/></svg>
<svg class="b" style="left:717px;top:477px;" width="16" height="16" viewBox="0 0 16 16"><rect x="3.8" y="3.8" width="8.4" height="8.4" fill="none" stroke="#8a8a8a" stroke-width="1.6"/></svg>
<svg class="b" style="left:737px;top:477px;" width="16" height="16" viewBox="0 0 16 16"><path d="M8 3.8H3.8V12.2H12.2V8" fill="none" stroke="#8a8a8a" stroke-width="1.6"/><path d="M8.4 7.6L11.6 4.4" stroke="#8a8a8a" stroke-width="1.5"/><path d="M13 3V6.6L9.4 3z" fill="#8a8a8a"/></svg>
<svg class="b" style="left:757px;top:477px;" width="16" height="16" viewBox="0 0 16 16"><path d="M3.4000000000000004 3.4000000000000004L12.6 12.6M12.6 3.4000000000000004L3.4000000000000004 12.6" stroke="#8a8a8a" stroke-width="1.6" fill="none"/></svg>
<svg class="b" style="left:281px;top:509px;" width="12" height="12" viewBox="0 0 12 12"><circle cx="6" cy="6" r="6" fill="#4b96ad"/></svg>
<div class="t" style="top:507.8px;line-height:16px;font-size:12px;color:#1a1a1a;letter-spacing:0.033px;left:298px;">My_Counter_IP_slave_lite_v1_0_S00_AXI.vhd</div>
<svg class="b" style="left:684px;top:507px;" width="16" height="16" viewBox="0 0 16 16"><path d="M0.8 8L6.8 2.4V5.4H15V10.6H6.8V13.6z" fill="#2f4b87"/></svg>
<svg class="b" style="left:719px;top:507px;" width="16" height="16" viewBox="0 0 16 16"><path d="M15.2 8L9.2 2.4V5.4H1V10.6H9.2V13.6z" fill="#c4c4c4"/></svg>
<svg class="b" style="left:754px;top:507px;" width="16" height="16" viewBox="0 0 16 16"><path d="M6.66 1.03L9.34 1.03L9.57 2.73L10.61 3.16L11.98 2.12L13.88 4.02L12.84 5.39L13.27 6.43L14.97 6.66L14.97 9.34L13.27 9.57L12.84 10.61L13.88 11.98L11.98 13.88L10.61 12.84L9.57 13.27L9.34 14.97L6.66 14.97L6.43 13.27L5.39 12.84L4.02 13.88L2.12 11.98L3.16 10.61L2.73 9.57L1.03 9.34L1.03 6.66L2.73 6.43L3.16 5.39L2.12 4.02L4.02 2.12L5.39 3.16L6.43 2.73ZM8 5.7A2.3 2.3 0 1 0 8 10.3A2.3 2.3 0 1 0 8 5.7Z" fill="#2f4b87" fill-rule="evenodd"/></svg>
<div class="b" style="left:709px;top:505px;width:1px;height:20px;background:#dcdcdc;"></div>
<div class="b" style="left:744px;top:505px;width:1px;height:20px;background:#dcdcdc;"></div>
<div class="b" style="left:276px;top:532px;width:503px;height:2px;background:#ececec;"></div>
<div class="b" style="left:290px;top:547px;width:14px;height:14px;background:#fdfdfd;border:1.5px solid #a2a2a2;border-radius:3px;"></div>
<svg class="b" style="left:291px;top:548px;" width="12" height="12" viewBox="0 0 12 12"><path d="M2 6L5 9.2L10.2 2.8" fill="none" stroke="#555" stroke-width="2.4"/></svg>
<div class="t" style="top:546.8px;line-height:16px;font-size:12px;color:#1a1a1a;letter-spacing:0.293px;left:309px;">Enabled</div>
<div class="t" style="top:575.8px;line-height:16px;font-size:12px;color:#1a1a1a;letter-spacing:0.137px;left:290px;">Location:</div>
<div class="t" style="top:575.8px;line-height:16px;font-size:12px;color:#1a1a1a;letter-spacing:0.085px;left:390px;">c:/383/ip_repo/My_Counter_IP_1_0/hdl</div>
<div class="t" style="top:605.8px;line-height:16px;font-size:12px;color:#1a1a1a;letter-spacing:0.112px;left:290px;">Type:</div>
<div class="b" style="left:388px;top:601px;width:63px;height:24px;background:#ececec;border:1px solid #c4c4c4;"></div>
<div class="t" style="top:605.8px;line-height:16px;font-size:12px;color:#1a1a1a;letter-spacing:0.263px;left:391px;">VHDL</div>
<div class="b" style="left:459px;top:601px;width:24px;height:24px;background:#fff;border:1px solid #555;"></div>
<div class="t" style="top:601.8px;line-height:16px;font-size:13px;color:#555;left:463px;letter-spacing:2px;font-weight:bold;">...</div>
<div class="t" style="top:635.8px;line-height:16px;font-size:12px;color:#1a1a1a;letter-spacing:0.112px;left:290px;">Library:</div>
<div class="b" style="left:388px;top:631px;width:75px;height:24px;background:#ececec;border:1px solid #c4c4c4;"></div>
<div class="t" style="top:635.8px;line-height:16px;font-size:12px;color:#1a1a1a;letter-spacing:0.135px;left:390px;">xil_defaultlib</div>
<div class="b" style="left:471px;top:631px;width:24px;height:24px;background:#fff;border:1px solid #555;"></div>
<div class="t" style="top:631.8px;line-height:16px;font-size:13px;color:#555;left:475px;letter-spacing:2px;font-weight:bold;">...</div>
<div class="t" style="top:665.8px;line-height:16px;font-size:12px;color:#1a1a1a;letter-spacing:0.030px;left:290px;">Size:</div>
<div class="t" style="top:665.8px;line-height:16px;font-size:12px;color:#1a1a1a;letter-spacing:0.184px;left:391px;">37.1 KB</div>
<div class="t" style="top:695.8px;line-height:16px;font-size:12px;color:#1a1a1a;letter-spacing:0.138px;left:290px;">Modified:</div>
<div class="t" style="top:695.8px;line-height:16px;font-size:12px;color:#1a1a1a;letter-spacing:0.099px;left:390px;">Wednesday 03/05/25 12:05:55 AM</div>
<div class="b" style="left:765px;top:534px;width:14px;height:191px;background:#fafafa;border-left:1px solid #e6e6e6;"></div>
<div class="b" style="left:768px;top:550px;width:8px;height:77px;background:#c1c1c1;border-radius:4px;"></div>
<svg class="b" style="left:767px;top:535px;" width="12" height="12" viewBox="0 0 12 12"><path d="M1.6 8.4L6 4L10.4 8.4" fill="none" stroke="#5a5a5a" stroke-width="2"/></svg>
<svg class="b" style="left:767px;top:712px;" width="12" height="12" viewBox="0 0 12 12"><path d="M1.6 3.6L6 8L10.4 3.6" fill="none" stroke="#5a5a5a" stroke-width="2"/></svg>
<div class="b" style="left:276px;top:725px;width:503px;height:27px;background:#f7f7f7;"></div>
<div class="b" style="left:276px;top:725px;width:503px;height:1px;border-top:1px dashed #a9a9a9;"></div>
<div class="b" style="left:279px;top:729px;width:60px;height:20px;background:#fff;border:1px solid #c4c4c4;"></div>
<div class="t" style="top:731.8px;line-height:16px;font-size:12px;color:#1a1a1a;letter-spacing:-0.148px;left:286px;font-weight:bold;">General</div>
<div class="t" style="top:731.8px;line-height:16px;font-size:12px;color:#7d7d7d;letter-spacing:0.345px;left:351px;">Properties</div>
</section>
<section id="editor-panel">
<div class="b" style="left:795px;top:129px;width:1123px;height:626px;background:#fff;border:3px solid #4472c8;"></div>
<div class="b" style="left:798px;top:132px;width:1117px;height:28px;background:#eeeeee;"></div>
<div class="t" style="top:137.8px;line-height:16px;font-size:12px;color:#8c8c8c;letter-spacing:0.078px;left:804px;font-weight:bold;">Project Summary</div>
<svg class="b" style="left:923px;top:141px;" width="12" height="12" viewBox="2 2 12 12"><path d="M4.5 4.5L11.5 11.5M11.5 4.5L4.5 11.5" stroke="#767676" stroke-width="1.5" fill="none"/></svg>
<div class="b" style="left:937px;top:132px;width:1px;height:24px;background:#b4b4b4;"></div>
<div class="b" style="left:938px;top:132px;width:1px;height:24px;background:#d9d9d9;"></div>
<div class="t" style="top:137.8px;line-height:16px;font-size:12px;color:#8c8c8c;letter-spacing:-0.015px;left:945px;font-weight:bold;">Package IP - My_Counter_IP</div>
<svg class="b" style="left:1125px;top:141px;" width="12" height="12" viewBox="2 2 12 12"><path d="M4.5 4.5L11.5 11.5M11.5 4.5L4.5 11.5" stroke="#767676" stroke-width="1.5" fill="none"/></svg>
<div class="b" style="left:1139px;top:132px;width:1px;height:24px;background:#b4b4b4;"></div>
<div class="b" style="left:1140px;top:132px;width:1px;height:24px;background:#d9d9d9;"></div>
<div class="t" style="top:137.8px;line-height:16px;font-size:12px;color:#8c8c8c;letter-spacing:-0.042px;left:1147px;font-weight:bold;">My_Counter_IP.vhd</div>
<svg class="b" style="left:1276px;top:141px;" width="12" height="12" viewBox="2 2 12 12"><path d="M4.5 4.5L11.5 11.5M11.5 4.5L4.5 11.5" stroke="#767676" stroke-width="1.5" fill="none"/></svg>
<div class="b" style="left:1291px;top:132px;width:310px;height:29px;background:#fff;"></div>
<div class="t" style="top:137.8px;line-height:16px;font-size:12px;color:#1a1a1a;letter-spacing:-0.048px;left:1298px;font-weight:bold;">My_Counter_IP_slave_lite_v1_0_S00_AXI.vhd *</div>
<svg class="b" style="left:1585px;top:141px;" width="12" height="12" viewBox="2 2 12 12"><path d="M4.5 4.5L11.5 11.5M11.5 4.5L4.5 11.5" stroke="#767676" stroke-width="1.5" fill="none"/></svg>
<svg class="b" style="left:1853px;top:138px;" width="16" height="16" viewBox="0 0 16 16"><text x="8" y="13" text-anchor="middle" font-family="Liberation Sans, sans-serif" font-weight="bold" font-size="14" fill="#8a8a8a">?</text></svg>
<svg class="b" style="left:1873px;top:138px;" width="16" height="16" viewBox="0 0 16 16"><rect x="3.8" y="3.8" width="8.4" height="8.4" fill="none" stroke="#8a8a8a" stroke-width="1.6"/></svg>
<svg class="b" style="left:1893px;top:138px;" width="16" height="16" viewBox="0 0 16 16"><path d="M8 3.8H3.8V12.2H12.2V8" fill="none" stroke="#8a8a8a" stroke-width="1.6"/><path d="M8.4 7.6L11.6 4.4" stroke="#8a8a8a" stroke-width="1.5"/><path d="M13 3V6.6L9.4 3z" fill="#8a8a8a"/></svg>
<div class="t" style="top:170.8px;line-height:16px;font-size:12px;color:#1a1a1a;letter-spacing:0.054px;left:807px;">c:/383/ip_repo/My_Counter_IP_1_0/hdl/My_Counter_IP_slave_lite_v1_0_S00_AXI.vhd</div>
<svg class="b" style="left:1892px;top:170px;" width="16" height="16" viewBox="0 0 16 16"><path d="M4.1 4.1L11.9 11.9M11.9 4.1L4.1 11.9" stroke="#777" stroke-width="1.1" fill="none"/></svg>
<svg class="b" style="left:807.0px;top:204.0px;" width="16" height="16" viewBox="0 0 16 16"><circle cx="7" cy="7" r="5.2" fill="none" stroke="#2f4b87" stroke-width="1.9"/><path d="M11.4 11.4L13.2 13.2" stroke="#2f4b87" stroke-width="3" stroke-linecap="round"/></svg>
<svg class="b" style="left:842.0px;top:204.0px;" width="16" height="16" viewBox="0 0 16 16"><path d="M1.2 1.4H4.2V6.2H12.4V1.4H14.8V14.8H1.2z" fill="#2f4b87"/><rect x="9.2" y="1.4" width="1.7" height="3.4" fill="#2f4b87"/></svg>
<svg class="b" style="left:877.0px;top:204.0px;" width="16" height="16" viewBox="0 0 16 16"><path d="M1.2 7.2L6.8 2.6V5.4C11.5 5.4 14.4 7.8 14.8 12.4C13 9.8 10.6 9 6.8 9.2V11.8z" fill="#2f4b87"/></svg>
<svg class="b" style="left:912.0px;top:204.0px;" width="16" height="16" viewBox="0 0 16 16"><path d="M14.8 7.2L9.2 2.6V5.4C4.5 5.4 1.6 7.8 1.2 12.4C3 9.8 5.4 9 9.2 9.2V11.8z" fill="#bdbdbd"/></svg>
<svg class="b" style="left:947.0px;top:204.0px;" width="16" height="16" viewBox="0 0 16 16"><path d="M4.6 1.5L10.2 11M11.4 1.5L5.8 11" stroke="#2f4b87" stroke-width="1.5" fill="none"/><circle cx="4.6" cy="12.4" r="1.9" fill="none" stroke="#2f4b87" stroke-width="1.4"/><circle cx="11.4" cy="12.4" r="1.9" fill="none" stroke="#2f4b87" stroke-width="1.4"/></svg>
<svg class="b" style="left:982.0px;top:204.0px;" width="16" height="16" viewBox="0 0 16 16"><path d="M2 1h8.6v2H4.4v9.6H2z" fill="#2f4b87"/><rect x="5.2" y="3.8" width="8.6" height="11" rx="0" fill="#fff" stroke="#2f4b87" stroke-width="1.3"/><path d="M7 7.4h5M7 9.6h5M7 11.8h5" stroke="#2f4b87" stroke-width="1.2"/></svg>
<svg class="b" style="left:1017.0px;top:204.0px;" width="16" height="16" viewBox="0 0 16 16"><rect x="1.4" y="1.2" width="9.6" height="12.6" rx="0.6" fill="#2f4b87"/><path d="M3.6 2.4h5.2" stroke="#fff" stroke-width="0.9"/><rect x="8.4" y="5.8" width="6.2" height="9" rx="0.5" fill="#fff" stroke="#2f4b87" stroke-width="1.3"/></svg>
<svg class="b" style="left:1052.0px;top:204.0px;" width="16" height="16" viewBox="0 0 16 16"><path d="M2.2 2L13.8 14M13.8 2L2.2 14" stroke="#ee1111" stroke-width="2.4"/></svg>
<svg class="b" style="left:1087.0px;top:204.0px;" width="16" height="16" viewBox="0 0 16 16"><path d="M7 1.2L3 14.8M13.4 1.2L9.4 14.8" stroke="#2f4b87" stroke-width="2.6"/></svg>
<svg class="b" style="left:1122.0px;top:204.0px;" width="16" height="16" viewBox="0 0 16 16"><rect x="1" y="1.6" width="14" height="12.8" fill="#2f4b87"/><rect x="5.6" y="2.8" width="4.8" height="10.4" fill="#a9c0ea"/><path d="M2 4.2h2.6M2 6.8h2.6M2 9.4h2.6M2 12h2.6M11.4 4.2h2.6M11.4 6.8h2.6M11.4 9.4h2.6M11.4 12h2.6" stroke="#fff" stroke-width="1.1"/></svg>
<svg class="b" style="left:1157.0px;top:204.0px;" width="16" height="16" viewBox="0 0 16 16"><path d="M8 1.6A4.4 4.4 0 0 0 5.6 9.6V11.4H10.4V9.6A4.4 4.4 0 0 0 8 1.6z" fill="none" stroke="#2f4b87" stroke-width="1.3"/><path d="M6 13.4H10" stroke="#2f4b87" stroke-width="1.4"/></svg>
<svg class="b" style="left:1890.0px;top:204.0px;" width="16" height="16" viewBox="0 0 16 16"><path d="M6.66 1.03L9.34 1.03L9.57 2.73L10.61 3.16L11.98 2.12L13.88 4.02L12.84 5.39L13.27 6.43L14.97 6.66L14.97 9.34L13.27 9.57L12.84 10.61L13.88 11.98L11.98 13.88L10.61 12.84L9.57 13.27L9.34 14.97L6.66 14.97L6.43 13.27L5.39 12.84L4.02 13.88L2.12 11.98L3.16 10.61L2.73 9.57L1.03 9.34L1.03 6.66L2.73 6.43L3.16 5.39L2.12 4.02L4.02 2.12L5.39 3.16L6.43 2.73ZM8 5.7A2.3 2.3 0 1 0 8 10.3A2.3 2.3 0 1 0 8 5.7Z" fill="#2f4b87" fill-rule="evenodd"/></svg>
<div class="b" style="left:832px;top:202px;width:1px;height:20px;background:#dcdcdc;"></div>
<div class="b" style="left:867px;top:202px;width:1px;height:20px;background:#dcdcdc;"></div>
<div class="b" style="left:902px;top:202px;width:1px;height:20px;background:#dcdcdc;"></div>
<div class="b" style="left:937px;top:202px;width:1px;height:20px;background:#dcdcdc;"></div>
<div class="b" style="left:972px;top:202px;width:1px;height:20px;background:#dcdcdc;"></div>
<div class="b" style="left:1007px;top:202px;width:1px;height:20px;background:#dcdcdc;"></div>
<div class="b" style="left:1042px;top:202px;width:1px;height:20px;background:#dcdcdc;"></div>
<div class="b" style="left:1077px;top:202px;width:1px;height:20px;background:#dcdcdc;"></div>
<div class="b" style="left:1112px;top:202px;width:1px;height:20px;background:#dcdcdc;"></div>
<div class="b" style="left:1147px;top:202px;width:1px;height:20px;background:#dcdcdc;"></div>
<div class="b" style="left:1182px;top:202px;width:1px;height:20px;background:#dcdcdc;"></div>
<div class="b" style="left:798px;top:228px;width:1117px;height:2px;background:#e6e6e6;"></div>
<div class="b" style="left:851px;top:553px;width:1040px;height:17px;background:#ffffd6;"></div>
<div class="b" style="left:835px;top:230px;width:1px;height:510px;background:repeating-linear-gradient(180deg,#8a8a8a 0,#8a8a8a 2.5px,transparent 2.5px,transparent 4.25px);"></div>
<div class="t code" style="top:231.8px;line-height:16px;font-size:12px;color:#858585;right:1094px;">1</div>
<div class="t code" style="top:231.8px;line-height:16px;font-size:12px;color:#1a1a1a;left:851px;"><span class="kw">library</span> ieee;</div>
<div class="t code" style="top:248.8px;line-height:16px;font-size:12px;color:#858585;right:1094px;">2</div>
<div class="t code" style="top:248.8px;line-height:16px;font-size:12px;color:#1a1a1a;left:851px;"><span class="kw">use</span> ieee.<span class="ty">std_logic_1164</span>.<span class="kw">all</span>;</div>
<div class="t code" style="top:265.8px;line-height:16px;font-size:12px;color:#858585;right:1094px;">3</div>
<div class="t code" style="top:265.8px;line-height:16px;font-size:12px;color:#1a1a1a;left:851px;"><span class="kw">use</span> ieee.<span class="ty">numeric_std</span>.<span class="kw">all</span>;</div>
<div class="t code" style="top:282.8px;line-height:16px;font-size:12px;color:#858585;right:1094px;">4</div>
<div class="t code" style="top:299.8px;line-height:16px;font-size:12px;color:#858585;right:1094px;">5</div>
<div class="t code" style="top:299.8px;line-height:16px;font-size:12px;color:#1a1a1a;left:851px;"><span class="kw">entity</span> My_Counter_IP_slave_lite_v1_0_S00_AXI <span class="kw">is</span></div>
<svg class="b" style="left:830px;top:301px;" width="11" height="12" viewBox="0 0 10 10.4"><path d="M1.5 0.8H8.5Q9.4 0.8 9.4 1.7V5.6L5 9.6L0.6 5.6V1.7Q0.6 0.8 1.5 0.8z" fill="#fff" stroke="#8a8a8a" stroke-width="0.9"/><path d="M2.8 4.2H7.2" stroke="#666" stroke-width="1"/></svg>
<div class="t code" style="top:316.8px;line-height:16px;font-size:12px;color:#858585;right:1094px;">6</div>
<div class="t code" style="top:316.8px;line-height:16px;font-size:12px;color:#1a1a1a;left:851px;">    <span class="kw">generic</span> (</div>
<div class="t code" style="top:333.8px;line-height:16px;font-size:12px;color:#858585;right:1094px;">7</div>
<div class="t code" style="top:333.8px;line-height:16px;font-size:12px;color:#1a1a1a;left:851px;">        <span class="cm">-- Users to add parameters here</span></div>
<svg class="b" style="left:830px;top:335px;" width="11" height="12" viewBox="0 0 10 10.4"><path d="M1.5 0.8H8.5Q9.4 0.8 9.4 1.7V5.6L5 9.6L0.6 5.6V1.7Q0.6 0.8 1.5 0.8z" fill="#fff" stroke="#8a8a8a" stroke-width="0.9"/><path d="M2.8 4.2H7.2" stroke="#666" stroke-width="1"/></svg>
<div class="t code" style="top:350.8px;line-height:16px;font-size:12px;color:#858585;right:1094px;">8</div>
<div class="t code" style="top:367.8px;line-height:16px;font-size:12px;color:#858585;right:1094px;">9</div>
<div class="t code" style="top:367.8px;line-height:16px;font-size:12px;color:#1a1a1a;left:851px;">        <span class="cm">-- User parameters ends</span></div>
<div class="t code" style="top:384.8px;line-height:16px;font-size:12px;color:#858585;right:1094px;">10</div>
<div class="t code" style="top:384.8px;line-height:16px;font-size:12px;color:#1a1a1a;left:851px;">        <span class="cm">-- Do not modify the parameters beyond this line</span></div>
<div class="t code" style="top:401.8px;line-height:16px;font-size:12px;color:#858585;right:1094px;">11</div>
<div class="t code" style="top:418.8px;line-height:16px;font-size:12px;color:#858585;right:1094px;">12</div>
<div class="t code" style="top:418.8px;line-height:16px;font-size:12px;color:#1a1a1a;left:851px;">        <span class="cm">-- Width of S_AXI data bus</span></div>
<svg class="b" style="left:830px;top:420px;" width="11" height="12" viewBox="0 0 10 10.4"><path d="M1.5 9.4H8.5Q9.4 9.4 9.4 8.5V4.6L5 0.6L0.6 4.6V8.5Q0.6 9.4 1.5 9.4z" fill="#fff" stroke="#8a8a8a" stroke-width="0.9"/><path d="M2.8 6H7.2" stroke="#666" stroke-width="1"/></svg>
<div class="t code" style="top:435.8px;line-height:16px;font-size:12px;color:#858585;right:1094px;">13</div>
<div class="t code" style="top:435.8px;line-height:16px;font-size:12px;color:#1a1a1a;left:851px;">        <span class="id">C_S_AXI_DATA_WIDTH  :</span> <span class="in">integer</span>   <span class="id">:</span>= 32;</div>
<div class="t code" style="top:452.8px;line-height:16px;font-size:12px;color:#858585;right:1094px;">14</div>
<div class="t code" style="top:452.8px;line-height:16px;font-size:12px;color:#1a1a1a;left:851px;">        <span class="cm">-- Width of S_AXI address bus</span></div>
<div class="t code" style="top:469.8px;line-height:16px;font-size:12px;color:#858585;right:1094px;">15</div>
<div class="t code" style="top:469.8px;line-height:16px;font-size:12px;color:#1a1a1a;left:851px;">        <span class="id">C_S_AXI_ADDR_WIDTH  :</span> <span class="in">integer</span>   <span class="id">:</span>= 7</div>
<div class="t code" style="top:486.8px;line-height:16px;font-size:12px;color:#858585;right:1094px;">16</div>
<div class="t code" style="top:486.8px;line-height:16px;font-size:12px;color:#1a1a1a;left:851px;">    );</div>
<div class="t code" style="top:503.8px;line-height:16px;font-size:12px;color:#858585;right:1094px;">17</div>
<div class="t code" style="top:503.8px;line-height:16px;font-size:12px;color:#1a1a1a;left:851px;">    <span class="kw">port</span> (</div>
<div class="t code" style="top:520.8px;line-height:16px;font-size:12px;color:#858585;right:1094px;">18</div>
<div class="t code" style="top:520.8px;line-height:16px;font-size:12px;color:#1a1a1a;left:851px;">        <span class="cm">-- Users to add ports here</span></div>
<div class="t code" style="top:537.8px;line-height:16px;font-size:12px;color:#858585;right:1094px;">19</div>
<div class="t code" style="top:537.8px;line-height:16px;font-size:12px;color:#1a1a1a;left:851px;">        <span class="id">LED :</span> <span class="kw">out</span> <span class="ty">std_logic_vector</span>(7 <span class="kw">downto</span> 0);</div>
<div class="t code" style="top:554.8px;line-height:16px;font-size:12px;color:#858585;right:1094px;">20</div>
<div class="t code" style="top:554.8px;line-height:16px;font-size:12px;color:#1a1a1a;left:851px;">        <span class="id">roll :</span> <span class="kw">out</span> <span class="ty">std_logic</span>;</div>
<svg class="b" style="left:830px;top:556px;" width="11" height="12" viewBox="0 0 10 10.4"><path d="M1.5 0.8H8.5Q9.4 0.8 9.4 1.7V5.6L5 9.6L0.6 5.6V1.7Q0.6 0.8 1.5 0.8z" fill="#fff" stroke="#8a8a8a" stroke-width="0.9"/><path d="M2.8 4.2H7.2" stroke="#666" stroke-width="1"/></svg>
<div class="t code" style="top:571.8px;line-height:16px;font-size:12px;color:#858585;right:1094px;">21</div>
<div class="t code" style="top:571.8px;line-height:16px;font-size:12px;color:#1a1a1a;left:851px;">        <span class="cm">-- User ports ends</span></div>
<div class="t code" style="top:588.8px;line-height:16px;font-size:12px;color:#858585;right:1094px;">22</div>
<div class="t code" style="top:588.8px;line-height:16px;font-size:12px;color:#1a1a1a;left:851px;">        <span class="cm">-- Do not modify the ports beyond this line</span></div>
<div class="t code" style="top:605.8px;line-height:16px;font-size:12px;color:#858585;right:1094px;">23</div>
<svg class="b" style="left:830px;top:607px;" width="11" height="12" viewBox="0 0 10 10.4"><path d="M1.5 9.4H8.5Q9.4 9.4 9.4 8.5V4.6L5 0.6L0.6 4.6V8.5Q0.6 9.4 1.5 9.4z" fill="#fff" stroke="#8a8a8a" stroke-width="0.9"/><path d="M2.8 6H7.2" stroke="#666" stroke-width="1"/></svg>
<div class="t code" style="top:622.8px;line-height:16px;font-size:12px;color:#858585;right:1094px;">24</div>
<div class="t code" style="top:622.8px;line-height:16px;font-size:12px;color:#1a1a1a;left:851px;">        <span class="cm">-- Global Clock Signal</span></div>
<div class="t code" style="top:639.8px;line-height:16px;font-size:12px;color:#858585;right:1094px;">25</div>
<div class="t code" style="top:639.8px;line-height:16px;font-size:12px;color:#1a1a1a;left:851px;">        <span class="id">S_AXI_ACLK  :</span> <span class="kw">in</span> <span class="ty">std_logic</span>;</div>
<div class="t code" style="top:656.8px;line-height:16px;font-size:12px;color:#858585;right:1094px;">26</div>
<div class="t code" style="top:656.8px;line-height:16px;font-size:12px;color:#1a1a1a;left:851px;">        <span class="cm">-- Global Reset Signal. This Signal is Active LOW</span></div>
<div class="t code" style="top:673.8px;line-height:16px;font-size:12px;color:#858585;right:1094px;">27</div>
<div class="t code" style="top:673.8px;line-height:16px;font-size:12px;color:#1a1a1a;left:851px;">        <span class="id">S_AXI_ARESETN   :</span> <span class="kw">in</span> <span class="ty">std_logic</span>;</div>
<div class="t code" style="top:690.8px;line-height:16px;font-size:12px;color:#858585;right:1094px;">28</div>
<div class="t code" style="top:690.8px;line-height:16px;font-size:12px;color:#1a1a1a;left:851px;">        <span class="cm">-- Write address (issued by master, acceped by Slave)</span></div>
<div class="t code" style="top:707.8px;line-height:16px;font-size:12px;color:#858585;right:1094px;">29</div>
<div class="t code" style="top:707.8px;line-height:16px;font-size:12px;color:#1a1a1a;left:851px;">        <span class="id">S_AXI_AWADDR    :</span> <span class="kw">in</span> <span class="ty">std_logic_vector</span>(C_S_AXI_ADDR_WIDTH-1 <span class="kw">downto</span> 0);</div>
<svg class="b" style="left:830px;top:709px;" width="11" height="12" viewBox="0 0 10 10.4"><path d="M1.5 0.8H8.5Q9.4 0.8 9.4 1.7V5.6L5 9.6L0.6 5.6V1.7Q0.6 0.8 1.5 0.8z" fill="#fff" stroke="#8a8a8a" stroke-width="0.9"/><path d="M2.8 4.2H7.2" stroke="#666" stroke-width="1"/></svg>
<div class="t code" style="top:724.8px;line-height:16px;font-size:12px;color:#858585;right:1094px;">30</div>
<div class="t code" style="top:724.8px;line-height:16px;font-size:12px;color:#1a1a1a;left:851px;">        <span class="cm">-- Write channel Protection type. This signal indicates the</span></div>
<div class="b" style="left:1054px;top:554px;width:2px;height:15px;background:#000;"></div>
<div class="b" style="left:1891px;top:230px;width:14px;height:508px;background:#fafafa;border-left:1px solid #e6e6e6;border-right:1px solid #e6e6e6;"></div>
<div class="b" style="left:1894px;top:247px;width:8px;height:34px;background:#c1c1c1;border-radius:4px;"></div>
<svg class="b" style="left:1893px;top:232px;" width="12" height="12" viewBox="0 0 12 12"><path d="M1.6 8.4L6 4L10.4 8.4" fill="none" stroke="#5a5a5a" stroke-width="2"/></svg>
<svg class="b" style="left:1893px;top:726px;" width="12" height="12" viewBox="0 0 12 12"><path d="M1.6 3.6L6 8L10.4 3.6" fill="none" stroke="#5a5a5a" stroke-width="2"/></svg>
<div class="b" style="left:1905px;top:230px;width:10px;height:10px;background:#00ff00;"></div>
<div class="b" style="left:851px;top:738px;width:1040px;height:14px;background:#f8f8f8;border-top:1px solid #e8e8e8;"></div>
<div class="b" style="left:868px;top:742px;width:632px;height:7px;background:#c1c1c1;border-radius:4px;"></div>
<svg class="b" style="left:853px;top:739px;" width="12" height="12" viewBox="0 0 12 12"><path d="M8.2 2.1L3.8 6.5L8.2 10.9" fill="none" stroke="#5a5a5a" stroke-width="2"/></svg>
<svg class="b" style="left:1879px;top:739px;" width="12" height="12" viewBox="0 0 12 12"><path d="M3.8 2.1L8.2 6.5L3.8 10.9" fill="none" stroke="#5a5a5a" stroke-width="2"/></svg>
</section>
<section id="design-runs-panel">
<div class="b" style="left:273px;top:768px;width:1645px;height:249px;background:#fff;border:1px solid #c8c8c8;"></div>
<div class="b" style="left:274px;top:769px;width:1643px;height:247px;border:2px solid #e6e6e6;"></div>
<div class="b" style="left:274px;top:769px;width:1643px;height:30px;background:#eeeeee;"></div>
<div class="t" style="top:776.8px;line-height:16px;font-size:12px;color:#8c8c8c;letter-spacing:-0.032px;left:282px;font-weight:bold;">Tcl Console</div>
<div class="b" style="left:363px;top:771px;width:1px;height:24px;background:#b4b4b4;"></div>
<div class="b" style="left:364px;top:771px;width:1px;height:24px;background:#d9d9d9;"></div>
<div class="t" style="top:776.8px;line-height:16px;font-size:12px;color:#8c8c8c;letter-spacing:0.347px;left:370px;font-weight:bold;">Messages</div>
<div class="b" style="left:445px;top:771px;width:1px;height:24px;background:#b4b4b4;"></div>
<div class="b" style="left:446px;top:771px;width:1px;height:24px;background:#d9d9d9;"></div>
<div class="t" style="top:776.8px;line-height:16px;font-size:12px;color:#8c8c8c;letter-spacing:-0.595px;left:452px;font-weight:bold;">Log</div>
<div class="b" style="left:486px;top:771px;width:1px;height:24px;background:#b4b4b4;"></div>
<div class="b" style="left:487px;top:771px;width:1px;height:24px;background:#d9d9d9;"></div>
<div class="t" style="top:776.8px;line-height:16px;font-size:12px;color:#8c8c8c;letter-spacing:0.076px;left:494px;font-weight:bold;">Reports</div>
<div class="b" style="left:553px;top:771px;width:1px;height:24px;background:#b4b4b4;"></div>
<div class="b" style="left:554px;top:771px;width:114px;height:29px;background:#fff;"></div>
<div class="t" style="top:776.8px;line-height:16px;font-size:12px;color:#1a1a1a;letter-spacing:-0.154px;left:561px;font-weight:bold;">Design Runs</div>
<svg class="b" style="left:651px;top:780px;" width="12" height="12" viewBox="2 2 12 12"><path d="M4.5 4.5L11.5 11.5M11.5 4.5L4.5 11.5" stroke="#767676" stroke-width="1.5" fill="none"/></svg>
<svg class="b" style="left:1833px;top:777px;" width="16" height="16" viewBox="0 0 16 16"><text x="8" y="13" text-anchor="middle" font-family="Liberation Sans, sans-serif" font-weight="bold" font-size="14" fill="#8a8a8a">?</text></svg>
<svg class="b" style="left:1853px;top:777px;" width="16" height="16" viewBox="0 0 16 16"><path d="M3 12.2h10" stroke="#8a8a8a" stroke-width="1.6"/></svg>
<svg class="b" style="left:1873px;top:777px;" width="16" height="16" viewBox="0 0 16 16"><rect x="3.8" y="3.8" width="8.4" height="8.4" fill="none" stroke="#8a8a8a" stroke-width="1.6"/></svg>
<svg class="b" style="left:1893px;top:777px;" width="16" height="16" viewBox="0 0 16 16"><path d="M8 3.8H3.8V12.2H12.2V8" fill="none" stroke="#8a8a8a" stroke-width="1.6"/><path d="M8.4 7.6L11.6 4.4" stroke="#8a8a8a" stroke-width="1.5"/><path d="M13 3V6.6L9.4 3z" fill="#8a8a8a"/></svg>
<svg class="b" style="left:285.0px;top:807.0px;" width="16" height="16" viewBox="0 0 16 16"><circle cx="7" cy="7" r="5.2" fill="none" stroke="#2f4b87" stroke-width="1.9"/><path d="M11.4 11.4L13.2 13.2" stroke="#2f4b87" stroke-width="3" stroke-linecap="round"/></svg>
<svg class="b" style="left:320.0px;top:807.0px;" width="16" height="16" viewBox="0 0 16 16"><path d="M2.4 7.2h11.2v1.6H2.4z" fill="#2f4b87"/><path d="M3 1.4h10L8 5.8zM3 14.6h10L8 10.2z" fill="#2f4b87"/></svg>
<svg class="b" style="left:355.0px;top:807.0px;" width="16" height="16" viewBox="0 0 16 16"><path d="M2.8 6.9h10.4v2.2H2.8z" fill="#2f4b87"/><path d="M3 5.8h10L8 1.2zM3 10.2h10L8 14.8z" fill="#2f4b87"/></svg>
<svg class="b" style="left:390.0px;top:807.0px;" width="16" height="16" viewBox="0 0 16 16"><path d="M3 2v12" stroke="#c4c4c4" stroke-width="2.2"/><path d="M13.4 2L5.6 8L13.4 14z" fill="#c4c4c4"/></svg>
<svg class="b" style="left:425.0px;top:807.0px;" width="16" height="16" viewBox="0 0 16 16"><path d="M8 2.6L2.8 8L8 13.4M13.6 2.6L8.4 8L13.6 13.4" fill="none" stroke="#c4c4c4" stroke-width="1.8"/></svg>
<svg class="b" style="left:460.0px;top:807.0px;" width="16" height="16" viewBox="0 0 16 16"><path d="M3 1.6L14 8L3 14.4z" fill="#c4c4c4"/></svg>
<svg class="b" style="left:495.0px;top:807.0px;" width="16" height="16" viewBox="0 0 16 16"><path d="M2.4 2.6L7.6 8L2.4 13.4M8 2.6L13.2 8L8 13.4" fill="none" stroke="#c4c4c4" stroke-width="1.8"/></svg>
<svg class="b" style="left:530.0px;top:807.0px;" width="16" height="16" viewBox="0 0 16 16"><path d="M6.8 1.5h2.4v5.3h5.3v2.4H9.2v5.3H6.8V9.2H1.5V6.8h5.3z" fill="#2f4b87"/></svg>
<svg class="b" style="left:565.0px;top:807.0px;" width="16" height="16" viewBox="0 0 16 16"><path d="M13 2L3 14" stroke="#2f4b87" stroke-width="1.6"/><circle cx="4.4" cy="4.6" r="2.3" fill="none" stroke="#2f4b87" stroke-width="1.5"/><circle cx="11.6" cy="11.4" r="2.3" fill="none" stroke="#2f4b87" stroke-width="1.5"/></svg>
<div class="b" style="left:310px;top:805px;width:1px;height:20px;background:#dcdcdc;"></div>
<div class="b" style="left:345px;top:805px;width:1px;height:20px;background:#dcdcdc;"></div>
<div class="b" style="left:380px;top:805px;width:1px;height:20px;background:#dcdcdc;"></div>
<div class="b" style="left:415px;top:805px;width:1px;height:20px;background:#dcdcdc;"></div>
<div class="b" style="left:450px;top:805px;width:1px;height:20px;background:#dcdcdc;"></div>
<div class="b" style="left:485px;top:805px;width:1px;height:20px;background:#dcdcdc;"></div>
<div class="b" style="left:520px;top:805px;width:1px;height:20px;background:#dcdcdc;"></div>
<div class="b" style="left:555px;top:805px;width:1px;height:20px;background:#dcdcdc;"></div>
<div class="b" style="left:590px;top:805px;width:1px;height:20px;background:#dcdcdc;"></div>
<div class="b" style="left:276px;top:831px;width:1639px;height:24px;background:#eeeeee;"></div>
<div class="b" style="left:276px;top:877px;width:1639px;height:1px;background:#e0e0e0;"></div>
<div class="b" style="left:276px;top:900px;width:1639px;height:1px;background:#e0e0e0;"></div>
<div class="t" style="top:836.8px;line-height:16px;font-size:12px;color:#1a1a1a;letter-spacing:0.596px;left:283px;">Name</div>
<div class="t" style="top:836.8px;line-height:16px;font-size:12px;color:#1a1a1a;letter-spacing:0.311px;left:391px;">Constraints</div>
<div class="b" style="left:383px;top:831px;width:1px;height:70px;background:#dcdcdc;"></div>
<div class="t" style="top:836.8px;line-height:16px;font-size:12px;color:#1a1a1a;letter-spacing:0.156px;left:473px;">Status</div>
<div class="b" style="left:465px;top:831px;width:1px;height:70px;background:#dcdcdc;"></div>
<div class="t" style="top:836.8px;line-height:16px;font-size:12px;color:#1a1a1a;letter-spacing:0.402px;left:561px;">WNS</div>
<div class="b" style="left:553px;top:831px;width:1px;height:70px;background:#dcdcdc;"></div>
<div class="t" style="top:836.8px;line-height:16px;font-size:12px;color:#1a1a1a;letter-spacing:0.900px;left:607px;">TNS</div>
<div class="b" style="left:599px;top:831px;width:1px;height:70px;background:#dcdcdc;"></div>
<div class="t" style="top:836.8px;line-height:16px;font-size:12px;color:#1a1a1a;letter-spacing:0.402px;left:650px;">WHS</div>
<div class="b" style="left:643px;top:831px;width:1px;height:70px;background:#dcdcdc;"></div>
<div class="t" style="top:836.8px;line-height:16px;font-size:12px;color:#1a1a1a;letter-spacing:0.400px;left:695px;">THS</div>
<div class="b" style="left:687px;top:831px;width:1px;height:70px;background:#dcdcdc;"></div>
<div class="t" style="top:836.8px;line-height:16px;font-size:12px;color:#1a1a1a;letter-spacing:0.154px;left:737px;">WBSS</div>
<div class="b" style="left:729px;top:831px;width:1px;height:70px;background:#dcdcdc;"></div>
<div class="t" style="top:836.8px;line-height:16px;font-size:12px;color:#1a1a1a;letter-spacing:0.378px;left:790px;">TPWS</div>
<div class="b" style="left:782px;top:831px;width:1px;height:70px;background:#dcdcdc;"></div>
<div class="t" style="top:836.8px;line-height:16px;font-size:12px;color:#1a1a1a;letter-spacing:0.410px;left:842px;">Total Power</div>
<div class="b" style="left:834px;top:831px;width:1px;height:70px;background:#dcdcdc;"></div>
<div class="t" style="top:836.8px;line-height:16px;font-size:12px;color:#1a1a1a;letter-spacing:0.313px;left:925px;">Failed Routes</div>
<div class="b" style="left:917px;top:831px;width:1px;height:70px;background:#dcdcdc;"></div>
<div class="t" style="top:836.8px;line-height:16px;font-size:12px;color:#1a1a1a;letter-spacing:0.108px;left:1020px;">Methodology</div>
<div class="b" style="left:1012px;top:831px;width:1px;height:70px;background:#dcdcdc;"></div>
<div class="t" style="top:836.8px;line-height:16px;font-size:12px;color:#1a1a1a;letter-spacing:0.097px;left:1107px;">RQA Score</div>
<div class="b" style="left:1099px;top:831px;width:1px;height:70px;background:#dcdcdc;"></div>
<div class="t" style="top:836.8px;line-height:16px;font-size:12px;color:#1a1a1a;letter-spacing:0.267px;left:1185px;">QoR Suggestions</div>
<div class="b" style="left:1177px;top:831px;width:1px;height:70px;background:#dcdcdc;"></div>
<div class="t" style="top:836.8px;line-height:16px;font-size:12px;color:#1a1a1a;letter-spacing:0.565px;left:1301px;">LUT</div>
<div class="b" style="left:1293px;top:831px;width:1px;height:70px;background:#dcdcdc;"></div>
<div class="t" style="top:836.8px;line-height:16px;font-size:12px;color:#1a1a1a;letter-spacing:-0.861px;left:1342px;">FF</div>
<div class="b" style="left:1334px;top:831px;width:1px;height:70px;background:#dcdcdc;"></div>
<div class="t" style="top:836.8px;line-height:16px;font-size:12px;color:#1a1a1a;letter-spacing:-0.291px;left:1374px;">BRAM</div>
<div class="b" style="left:1366px;top:831px;width:1px;height:70px;background:#dcdcdc;"></div>
<div class="t" style="top:836.8px;line-height:16px;font-size:12px;color:#1a1a1a;letter-spacing:-0.178px;left:1425px;">URAM</div>
<div class="b" style="left:1417px;top:831px;width:1px;height:70px;background:#dcdcdc;"></div>
<div class="t" style="top:836.8px;line-height:16px;font-size:12px;color:#1a1a1a;letter-spacing:0.562px;left:1477px;">DSP</div>
<div class="b" style="left:1469px;top:831px;width:1px;height:70px;background:#dcdcdc;"></div>
<div class="t" style="top:836.8px;line-height:16px;font-size:12px;color:#1a1a1a;letter-spacing:0.114px;left:1520px;">Start</div>
<div class="b" style="left:1512px;top:831px;width:1px;height:70px;background:#dcdcdc;"></div>
<div class="t" style="top:836.8px;line-height:16px;font-size:12px;color:#1a1a1a;letter-spacing:0.406px;left:1563px;">Elapsed</div>
<div class="b" style="left:1555px;top:831px;width:1px;height:70px;background:#dcdcdc;"></div>
<div class="t" style="top:836.8px;line-height:16px;font-size:12px;color:#1a1a1a;letter-spacing:0.069px;left:1627px;">Run Strategy</div>
<div class="b" style="left:1619px;top:831px;width:1px;height:70px;background:#dcdcdc;"></div>
<svg class="b" style="left:280px;top:860px;" width="12" height="12" viewBox="0 0 16 16"><path d="M3 5.5L8 10.5L13 5.5" fill="none" stroke="#555" stroke-width="1.9"/></svg>
<svg class="b" style="left:299px;top:860px;" width="11" height="12" viewBox="0 0 11 12"><path d="M1.6 1.2L9.6 6L1.6 10.8z" fill="none" stroke="#a9a9a9" stroke-width="1"/></svg>
<div class="t" style="top:858.8px;line-height:16px;font-size:12px;color:#1a1a1a;letter-spacing:0.295px;left:317px;">synth_1</div>
<div class="t" style="top:858.8px;line-height:16px;font-size:12px;color:#1a1a1a;letter-spacing:0.472px;left:391px;">constrs_1</div>
<div class="t" style="top:858.8px;line-height:16px;font-size:12px;color:#1a1a1a;letter-spacing:0.211px;left:473px;">Not started</div>
<svg class="b" style="left:315px;top:883px;" width="11" height="12" viewBox="0 0 11 12"><path d="M1.6 1.2L9.6 6L1.6 10.8z" fill="none" stroke="#a9a9a9" stroke-width="1"/></svg>
<div class="t" style="top:881.8px;line-height:16px;font-size:12px;color:#1a1a1a;letter-spacing:0.690px;left:333px;">impl_1</div>
<div class="t" style="top:881.8px;line-height:16px;font-size:12px;color:#1a1a1a;letter-spacing:0.472px;left:391px;">constrs_1</div>
<div class="t" style="top:881.8px;line-height:16px;font-size:12px;color:#1a1a1a;letter-spacing:0.211px;left:473px;">Not started</div>
<div class="t" style="top:858.8px;line-height:16px;font-size:12px;color:#1a1a1a;letter-spacing:0.134px;left:1627px;">Vivado Synthesis Defaults (Vivado Synthesis 2024)</div>
<div class="t" style="top:881.8px;line-height:16px;font-size:12px;color:#1a1a1a;left:1627px;width:288px;overflow:hidden;letter-spacing:0.12px;">Vivado Implementation Defaults (Vivado Implementation 2024)</div>
<div class="b" style="left:276px;top:1000px;width:1639px;height:14px;background:#f7f7f7;border-top:1px solid #e4e4e4;"></div>
<div class="b" style="left:293px;top:1003px;width:1075px;height:8px;background:#c1c1c1;border-radius:4px;"></div>
<svg class="b" style="left:278.5px;top:1001px;" width="12" height="12" viewBox="0 0 12 12"><path d="M8.2 2.1L3.8 6.5L8.2 10.9" fill="none" stroke="#5a5a5a" stroke-width="2"/></svg>
<svg class="b" style="left:1902px;top:1001px;" width="12" height="12" viewBox="0 0 12 12"><path d="M3.8 2.1L8.2 6.5L3.8 10.9" fill="none" stroke="#5a5a5a" stroke-width="2"/></svg>
<div class="t" style="top:1021.8px;line-height:16px;font-size:12px;color:#1a1a1a;letter-spacing:0.192px;left:1729px;clip-path:inset(0 0 5.8px 0);">20:30</div>
<div class="t" style="top:1021.8px;line-height:16px;font-size:12px;color:#1a1a1a;letter-spacing:0.558px;left:1811px;clip-path:inset(0 0 5.8px 0);">Insert</div>
<div class="t" style="top:1021.8px;line-height:16px;font-size:12px;color:#1a1a1a;letter-spacing:-0.404px;left:1870px;clip-path:inset(0 0 5.8px 0);">VHDL</div>
</section>
<section id="taskbar">
<div class="b" style="left:0px;top:1032px;width:1920px;height:48px;background:linear-gradient(90deg,#dce2db 0%,#dfe4dc 35%,#e5e4df 60%,#e9e2e0 80%,#ebe3e2 100%);border-top:1px solid #babdb9;"></div>
<svg class="b" style="left:16px;top:1045px;" width="24" height="22" viewBox="0 0 24 22"><rect x="0" y="0" width="24" height="22" rx="1.5" fill="#1556c0"/><rect x="1.8" y="1.8" width="9.4" height="18" fill="#fdfdfd"/><rect x="12.4" y="1.8" width="9.8" height="9.8" fill="#5cd0fa"/><rect x="12.4" y="11.6" width="9.8" height="4.4" fill="#29a4f0"/><rect x="12.4" y="16" width="9.8" height="3.8" fill="#1b84e0"/></svg>
<svg class="b" style="left:508.0px;top:1044.0px;" width="24" height="24" viewBox="0 0 24 24"><defs><linearGradient id="wg" x1="0" y1="0" x2="1" y2="1"><stop offset="0" stop-color="#4cc2ff"/><stop offset="1" stop-color="#0a6cd6"/></linearGradient></defs><rect x="0.5" y="0.5" width="11" height="11" rx="1" fill="url(#wg)"/><rect x="12.5" y="0.5" width="11" height="11" rx="1" fill="url(#wg)"/><rect x="0.5" y="12.5" width="11" height="11" rx="1" fill="url(#wg)"/><rect x="12.5" y="12.5" width="11" height="11" rx="1" fill="url(#wg)"/></svg>
<svg class="b" style="left:553.0px;top:1044.0px;" width="24" height="24" viewBox="0 0 24 24"><circle cx="10.2" cy="9.8" r="7.4" fill="none" stroke="#2a2a2a" stroke-width="2.2"/><path d="M15.6 15.4L21.4 21.4" stroke="#2a2a2a" stroke-width="2.6" stroke-linecap="round"/></svg>
<svg class="b" style="left:596.0px;top:1044.0px;" width="24" height="24" viewBox="0 0 24 24"><rect x="1" y="7" width="17" height="15.6" rx="1.5" fill="#262626"/><defs><linearGradient id="tv" x1="0" y1="1" x2="1" y2="0"><stop offset="0" stop-color="#a9a9a9"/><stop offset="1" stop-color="#ffffff"/></linearGradient></defs><rect x="7" y="1" width="16.4" height="15" rx="1.5" fill="url(#tv)"/></svg>
<svg class="b" style="left:640.0px;top:1044.0px;" width="24" height="24" viewBox="0 0 24 24"><defs><linearGradient id="ch" x1="0" y1="0" x2="1" y2="1"><stop offset="0" stop-color="#8b7be8"/><stop offset="1" stop-color="#5a55c4"/></linearGradient></defs><path d="M12 1.2A10.8 10.8 0 1 1 6.2 21.2L1.2 23L2.6 17.6A10.8 10.8 0 0 1 12 1.2z" fill="url(#ch)"/><rect x="5.4" y="7.8" width="9" height="8" rx="1.6" fill="#fff"/><path d="M15 11.6L18.8 8.6V15.4L15 12.6z" fill="#fff"/></svg>
<svg class="b" style="left:684.25px;top:1043.25px;" width="25.5" height="25.5" viewBox="0 0 24 24"><path d="M1 4.2Q1 2.6 2.6 2.6H8.4L10.6 4.8H21.4Q23 4.8 23 6.4V8H1z" fill="#e8a81c"/><path d="M1 6.6H23V20Q23 21.6 21.4 21.6H2.6Q1 21.6 1 20z" fill="#fcd354"/><path d="M5 21.6V18Q5 16.2 6.8 16.2H17.2Q19 16.2 19 18V21.6z" fill="#1e78d2"/><rect x="8" y="18.2" width="8" height="1.2" fill="#0f5aa8"/></svg>
<div class="b" style="left:694px;top:1072px;width:6px;height:3px;background:#8b8b8b;border-radius:2px;"></div>
<svg class="b" style="left:728.0px;top:1044.0px;" width="24" height="24" viewBox="0 0 24 24"><path d="M8 5.6V3.8Q8 1.6 10.2 1.6H13.8Q16 1.6 16 3.8V5.6" fill="none" stroke="#35a6ee" stroke-width="1.8"/><path d="M1 5.6H23V20.2Q23 22.4 20.8 22.4H3.2Q1 22.4 1 20.2z" fill="#0f4a92"/><rect x="7.6" y="9.2" width="4" height="4" fill="#f25022"/><rect x="12.4" y="9.2" width="4" height="4" fill="#7fba00"/><rect x="7.6" y="14" width="4" height="4" fill="#00a4ef"/><rect x="12.4" y="14" width="4" height="4" fill="#ffb900"/></svg>
<svg class="b" style="left:771.5px;top:1043.5px;" width="25" height="25" viewBox="0 0 24 24"><circle cx="12" cy="12" r="11.4" fill="#fff"/><path d="M12 0.6A11.4 11.4 0 0 1 21.87 6.3H12A5.7 5.7 0 0 0 7.06 9.15L2.13 6.3A11.4 11.4 0 0 1 12 0.6z" fill="#e33b2e"/><path d="M21.87 6.3A11.4 11.4 0 0 1 12 23.4L16.94 14.85A5.7 5.7 0 0 0 16.94 9.15L12 6.3z" fill="#fcc934"/><path d="M12 23.4A11.4 11.4 0 0 1 2.13 6.3L7.06 14.85A5.7 5.7 0 0 0 12 17.7L16.94 14.85z" fill="#2ca14a"/><circle cx="12" cy="12" r="5.3" fill="#fff"/><circle cx="12" cy="12" r="4.2" fill="#4a8af4"/></svg>
<div class="b" style="left:781px;top:1072px;width:6px;height:3px;background:#8b8b8b;border-radius:2px;"></div>
<svg class="b" style="left:816.0px;top:1044.0px;" width="24" height="24" viewBox="0 0 24 24"><circle cx="12" cy="12" r="10.4" fill="#d8d8d8"/><circle cx="12" cy="12" r="9.4" fill="#5a22c8"/><text x="12" y="17.6" text-anchor="middle" font-family="Liberation Sans, sans-serif" font-weight="bold" font-size="15" fill="#fff">S</text></svg>
<svg class="b" style="left:861.0px;top:1044.0px;" width="24" height="24" viewBox="0 0 24 24"><circle cx="12" cy="12" r="11" fill="#fff"/><path d="M12 6Q18.6 6 18.6 11Q18.6 15.4 13 15.8L10.4 18.6V15.6Q5.4 14.8 5.4 11Q5.4 6 12 6z" fill="#2f7de8"/><path d="M8 9.6h2M11 9.6h2M14 9.6h2M9 12h2M12.4 12h2" stroke="#1b56b8" stroke-width="1"/></svg>
<svg class="b" style="left:905.0px;top:1044.0px;" width="24" height="24" viewBox="0 0 24 24"><circle cx="12" cy="12" r="11.2" fill="#b548d8"/><path d="M11 10.4L19.6 15L15.8 16L18 20L16.2 21L14 17L11.4 19.6z" fill="#fff"/><path d="M6.4 7.2L8.6 9M10.4 4.8L10.8 7.6M4.8 11.4L7.6 11.6M14.6 5.6L13.4 8" stroke="#fff" stroke-width="1.2"/></svg>
<div class="b" style="left:914px;top:1072px;width:6px;height:3px;background:#8b8b8b;border-radius:2px;"></div>
<svg class="b" style="left:949.0px;top:1044.0px;" width="24" height="24" viewBox="0 0 24 24"><path d="M17.4 0.8L23 3.4V20.6L17.4 23.2L7.4 13.6L3 17L1 16V8L3 7L7.4 10.4z" fill="#1f8ad6"/><path d="M17.4 0.8L23 3.4V20.6L17.4 23.2z" fill="#36a6f0"/><path d="M17.4 7.4L11.4 12L17.4 16.6z" fill="#dce2db"/><path d="M1 8L3 7L7.6 10.6L5.4 12.2z M1 16L3 17L7.6 13.4L5.4 11.8z" fill="#1570b8"/></svg>
<div class="b" style="left:958px;top:1072px;width:6px;height:3px;background:#8b8b8b;border-radius:2px;"></div>
<svg class="b" style="left:993.0px;top:1044.0px;" width="24" height="24" viewBox="0 0 24 24"><path d="M5.6 3.6H23.4L18.4 20.4H0.6z" fill="#3f6fd8"/><path d="M7 7.4L12.8 12L6 16.6" fill="none" stroke="#fff" stroke-width="2"/><path d="M11.8 17H16.6" stroke="#fff" stroke-width="1.8"/></svg>
<div class="b" style="left:1002px;top:1072px;width:6px;height:3px;background:#8b8b8b;border-radius:2px;"></div>
<svg class="b" style="left:1037.0px;top:1044.0px;" width="24" height="24" viewBox="0 0 24 24"><defs><linearGradient id="ed" x1="0" y1="0" x2="1" y2="0"><stop offset="0" stop-color="#1ba0e8"/><stop offset="0.6" stop-color="#32c0c8"/><stop offset="1" stop-color="#58c848"/></linearGradient></defs><circle cx="12" cy="12" r="11.4" fill="url(#ed)"/><path d="M0.8 13.6A11.4 11.4 0 0 0 21.4 18.4C17 21 10 19 9.2 13.2C9 10.4 11.4 8.6 13.6 8.8C8 5.6 1 8 0.8 13.6z" fill="#1565b8"/><path d="M13.6 8.8C17 9 18.4 11.6 17.4 13.6C16.8 14.8 14.4 15 14 13.6C13.4 15.8 15.6 17.6 18.6 17.2C22 16.6 23.8 13.6 23.2 10.4z" fill="#dfe4dc"/></svg>
<div class="b" style="left:1046px;top:1072px;width:6px;height:3px;background:#8b8b8b;border-radius:2px;"></div>
<svg class="b" style="left:1081.0px;top:1044.0px;" width="24" height="24" viewBox="0 0 24 24"><rect x="1" y="1" width="22" height="22" rx="1.4" fill="#2e2e2e"/><path d="M23 11.6V21.6Q23 23 21.6 23H11.6z" fill="#fcc41c"/></svg>
<div class="b" style="left:1090px;top:1072px;width:6px;height:3px;background:#8b8b8b;border-radius:2px;"></div>
<svg class="b" style="left:1125.0px;top:1044.0px;" width="24" height="24" viewBox="0 0 24 24"><rect x="0.4" y="0.4" width="23.2" height="23.2" rx="2.4" fill="#fdfdfd"/><rect x="8" y="3" width="6" height="5.4" fill="none" stroke="#777" stroke-width="0.9"/><rect x="11" y="14" width="6" height="5.4" fill="none" stroke="#777" stroke-width="0.9"/><rect x="19" y="4.6" width="3" height="3" fill="none" stroke="#777" stroke-width="0.8"/><rect x="2" y="16" width="3" height="3" fill="none" stroke="#777" stroke-width="0.8"/><circle cx="3.2" cy="7.6" r="1.8" fill="#22cc22"/><circle cx="21" cy="15.6" r="1.8" fill="#ee1111"/><path d="M5 7.6H8M14 5.6H19M5 17.4H11M17 16H19.4M15 8.4V11H7V14" fill="none" stroke="#5a5ad0" stroke-width="0.8" stroke-dasharray="1.4 0.8"/></svg>
<div class="b" style="left:1134px;top:1072px;width:6px;height:3px;background:#8b8b8b;border-radius:2px;"></div>
<svg class="b" style="left:1169.0px;top:1044.0px;" width="24" height="24" viewBox="0 0 24 24"><circle cx="17.4" cy="6.6" r="3.2" fill="#5b5fc7"/><circle cx="21.4" cy="8" r="2" fill="#7b83eb"/><path d="M10.8 10H22.2Q23.4 10 23.4 11.2V16.2Q23.4 21.4 18.4 21.4Q13.6 21.4 10.8 18z" fill="#7b83eb"/><path d="M9 10H19Q20 10 20 11V17.4Q20 22.6 14.6 22.6Q9 22.6 9 17.4z" fill="#5b5fc7"/><rect x="0.6" y="6" width="12.4" height="12.4" rx="1.2" fill="#4b53bc"/><path d="M3.6 9.2H10V10.8H7.6V15.8H6V10.8H3.6z" fill="#fff"/></svg>
<div class="b" style="left:1178px;top:1072px;width:6px;height:3px;background:#8b8b8b;border-radius:2px;"></div>
<svg class="b" style="left:1182px;top:1039px" width="16" height="16" viewBox="0 0 16 16"><circle cx="8" cy="8" r="8" fill="#c42b1c"/><text x="8" y="12" text-anchor="middle" font-family="Liberation Sans, sans-serif" font-size="11" fill="#fff">1</text></svg>
<svg class="b" style="left:1213.0px;top:1044.0px;" width="24" height="24" viewBox="0 0 24 24"><path d="M7 1.4H21.8Q23 1.4 23 2.6V21.4Q23 22.6 21.8 22.6H7z" fill="#1f9a55"/><path d="M15 1.4H21.8Q23 1.4 23 2.6V7H15z" fill="#3ac878"/><path d="M7 12H23V21.4Q23 22.6 21.8 22.6H7z" fill="#156c3c"/><path d="M7 7H15V12H7z" fill="#138a48"/><rect x="0.6" y="5.6" width="12.4" height="12.4" rx="1.2" fill="#117a3e"/><path d="M3.8 8.6H5.8L6.9 10.8L8 8.6H10L8 11.8L10 15H8L6.9 12.8L5.8 15H3.8L5.8 11.8z" fill="#fff"/></svg>
<div class="b" style="left:1222px;top:1072px;width:6px;height:3px;background:#8b8b8b;border-radius:2px;"></div>
<svg class="b" style="left:1257.0px;top:1044.0px;" width="24" height="24" viewBox="0 0 24 24"><rect x="0.4" y="0.4" width="23.2" height="23.2" rx="2.6" fill="#1a4fa0"/><path d="M11.8 2H22V12.4H5.8z" fill="#74d6fb"/><path d="M4.6 14.2L2 18.6V22H22V14.2z" fill="#3aa8f0"/><path d="M14.6 4.6L10 12.4" stroke="#2a7fd0" stroke-width="1"/></svg>
<div class="b" style="left:1266px;top:1072px;width:6px;height:3px;background:#8b8b8b;border-radius:2px;"></div>
<svg class="b" style="left:1301.0px;top:1044.0px;" width="24" height="24" viewBox="0 0 24 24"><rect x="3.4" y="0.8" width="17.2" height="22.4" rx="1.4" fill="#6c7c90"/><rect x="5.2" y="2.6" width="13.6" height="4.2" fill="#5cc8f4"/><g fill="#d8dde4"><rect x="5.2" y="8.6" width="3.6" height="3.6"/><rect x="10.2" y="8.6" width="3.6" height="3.6"/><rect x="15.2" y="8.6" width="3.6" height="3.6"/><rect x="5.2" y="13.4" width="3.6" height="3.6"/><rect x="10.2" y="13.4" width="3.6" height="3.6"/><rect x="5.2" y="18.2" width="3.6" height="3.6"/><rect x="10.2" y="18.2" width="3.6" height="3.6"/></g><rect x="15.2" y="13.4" width="3.6" height="8.4" fill="#1f5a9e"/></svg>
<div class="b" style="left:1310px;top:1072px;width:6px;height:3px;background:#8b8b8b;border-radius:2px;"></div>
<svg class="b" style="left:1345.0px;top:1044.0px;" width="24" height="24" viewBox="0 0 24 24"><circle cx="12" cy="12" r="11.2" fill="#fbfbfb" stroke="#e0dcdc" stroke-width="0.6"/><g stroke-width="2.4" stroke-linecap="round"><path d="M10 5.4V10" stroke="#36c5f0"/><path d="M5.4 9.8H8" stroke="#36c5f0"/><path d="M14 5.4V11" stroke="#2eb67d"/><path d="M17 10H18.6" stroke="#2eb67d"/><path d="M14 14H18.6" stroke="#ecb22e"/><path d="M14 17V18.6" stroke="#ecb22e"/><path d="M10 13V18.6" stroke="#e01e5a"/><path d="M5.4 14H7" stroke="#e01e5a"/></g></svg>
<div class="b" style="left:1354px;top:1072px;width:6px;height:3px;background:#8b8b8b;border-radius:2px;"></div>
<div class="b" style="left:1386px;top:1037px;width:34px;height:38px;background:#f0eeee;border-radius:4px;"></div>
<div class="b" style="left:1382px;top:1037px;width:34px;height:38px;background:#f6f4f4;border-radius:4px;border:1px solid #e9e6e6;"></div>
<svg class="b" style="left:1389.0px;top:1044.0px;" width="24" height="24" viewBox="0 0 24 24"><rect width="24" height="24" fill="#000"/><path d="M4.4 4.4H19.6V19.6L15.4 15.4V8.6H8.6z" fill="#fff"/><path d="M4.4 19.6V13L8.4 9V15.6H15L11 19.6z" fill="#fff"/></svg>
<div class="b" style="left:1393px;top:1072px;width:16px;height:3px;background:#1a78dc;border-radius:2px;"></div>
<svg class="b" style="left:1696px;top:1049px;" width="14" height="14" viewBox="0 0 14 14"><path d="M2 10L7 5L12 10" fill="none" stroke="#222" stroke-width="1.5"/></svg>
<svg class="b" style="left:1718px;top:1047px;" width="18" height="16" viewBox="0 0 18 16"><path d="M4.6 13.4Q1 13.4 1 10.2Q1 7.6 3.8 7.2Q4.6 3.4 8.6 3.4Q11.6 3.4 12.8 6Q17 6 17 9.8Q17 13.4 13.4 13.4z" fill="#9a9a9a" stroke="#333" stroke-width="1"/></svg>
<svg class="b" style="left:1741px;top:1046px;" width="20" height="20" viewBox="0 0 20 20"><path d="M3.4 9.6A6.6 6.6 0 0 1 15.2 5.6M16.6 10.4A6.6 6.6 0 0 1 4.8 14.4" fill="none" stroke="#222" stroke-width="1.3"/><path d="M15.6 1.8V5.8H11.6M4.4 18.2V14.2H8.4" fill="none" stroke="#222" stroke-width="1.3"/><circle cx="14.6" cy="14.2" r="4" fill="#ee1111"/></svg>
<svg class="b" style="left:1769px;top:1046px;" width="20" height="20" viewBox="0 0 20 20"><rect x="2" y="3.4" width="12.6" height="10" rx="0.8" fill="none" stroke="#222" stroke-width="1.2"/><path d="M8.2 13.4V17M5 17.2H12" stroke="#222" stroke-width="1.2"/><rect x="13" y="1.6" width="4" height="8.4" rx="1" fill="#e8e2e0" stroke="#222" stroke-width="1.1"/><path d="M15 3.2V5" stroke="#222" stroke-width="1"/></svg>
<svg class="b" style="left:1794px;top:1047px;" width="20" height="18" viewBox="0 0 20 18"><path d="M1.6 6.6H4.6L9 2.6V15.4L4.6 11.4H1.6z" fill="none" stroke="#222" stroke-width="1.2" stroke-linejoin="round"/><path d="M11.4 6.4Q13 9 11.4 11.6M13.6 4.6Q16.4 9 13.6 13.4M15.8 3Q19.6 9 15.8 15" fill="none" stroke="#222" stroke-width="1.1"/></svg>
<div class="t" style="top:1039.6px;line-height:16px;font-size:12px;color:#1a1a1a;letter-spacing:-0.453px;right:43px;">11:38 PM</div>
<div class="t" style="top:1056.4px;line-height:16px;font-size:12px;color:#1a1a1a;letter-spacing:0.298px;right:43px;">3/9/2025</div>
<svg class="b" style="left:1884px;top:1047px;" width="18" height="18" viewBox="0 0 18 18"><path d="M9 2Q13.6 2 13.6 7V10.6L15.4 13.2H2.6L4.4 10.6V7Q4.4 2 9 2z" fill="#222"/><path d="M7 14.6Q9 17 11 14.6z" fill="#222"/><text x="10.4" y="9.6" font-family="Liberation Sans, sans-serif" font-weight="bold" font-size="6" fill="#fff">z</text><text x="12.6" y="5.4" font-family="Liberation Sans, sans-serif" font-weight="bold" font-size="6" fill="#222">z</text></svg>
</section>
</div>
</body></html>
